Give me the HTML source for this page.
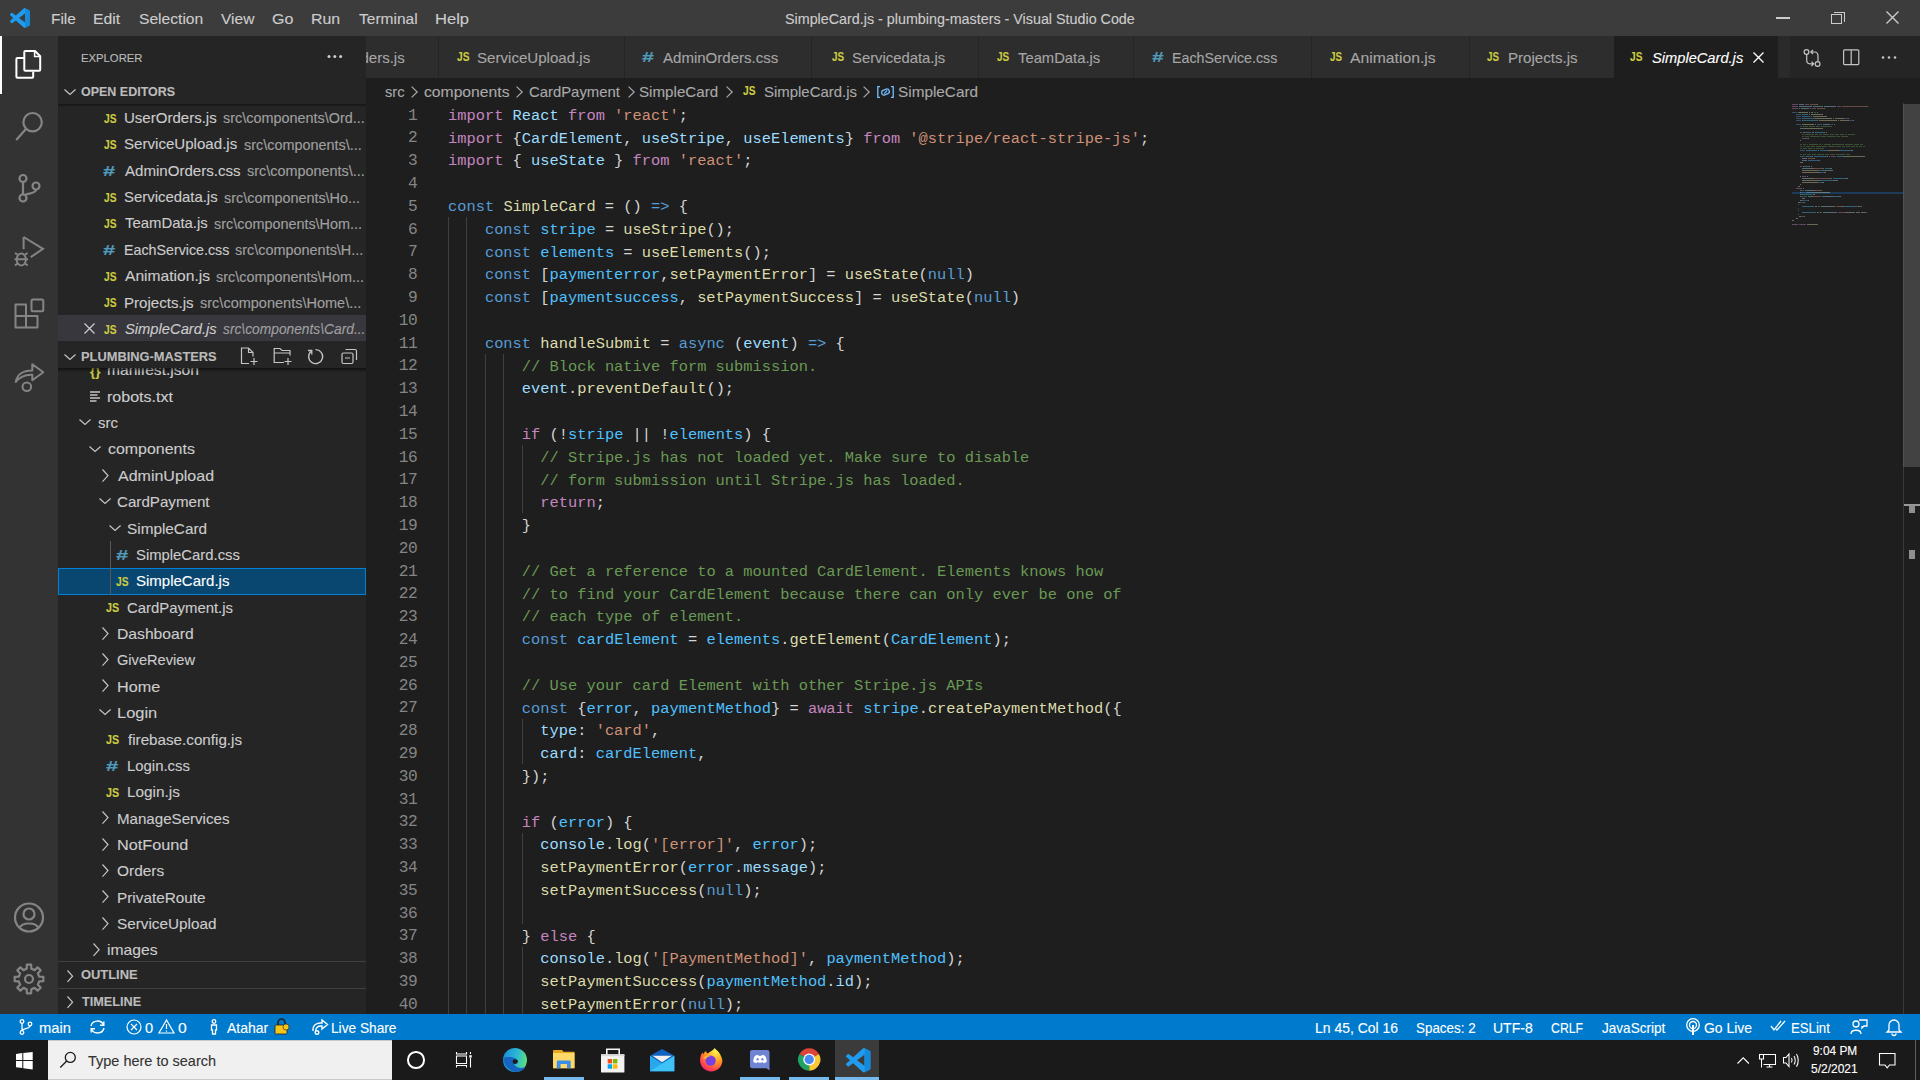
<!DOCTYPE html>
<html><head><meta charset="utf-8"><title>SimpleCard.js - plumbing-masters - Visual Studio Code</title>
<style>
*{margin:0;padding:0;box-sizing:border-box}
html,body{width:1920px;height:1080px;overflow:hidden;background:#1e1e1e;font-family:"Liberation Sans",sans-serif;color:#cccccc}
.a{position:absolute}
.t{position:absolute;white-space:pre;line-height:1}
svg{position:absolute;overflow:visible}
</style></head><body>

<div class="a" style="left:0;top:0;width:1920px;height:36px;background:#3c3c3c"></div>
<svg style="left:10px;top:8px" width="20" height="20" viewBox="0 0 100 100">
<path d="M96.46 10.8 L75.86 0.9 a6.23 6.23 0 0 0 -7.1 1.2 L29.35 38.05 L12.19 25 a4.16 4.16 0 0 0 -5.32 0.24 L1.37 30.25 a4.17 4.17 0 0 0 0 6.16 L16.26 50 L1.37 63.59 a4.17 4.17 0 0 0 0 6.16 l5.5 5 a4.16 4.16 0 0 0 5.32 0.24 L29.35 61.95 L68.76 97.9 a6.22 6.22 0 0 0 7.1 1.2 l20.6 -9.9 A6.24 6.24 0 0 0 100 83.6 V16.4 a6.24 6.24 0 0 0 -3.54 -5.6 Z M75 72.7 L45.1 50 L75 27.3 Z" fill="#1f9cf0"/><path d="M75.86 0.9 L96.46 10.8 a6.24 6.24 0 0 1 3.54 5.6 V83.6 a6.24 6.24 0 0 1 -3.54 5.6 l-20.6 9.9 Z" fill="#0f7fcc" opacity="0.6"/></svg>
<svg style="left:50.63px;top:6.48px" width="26.9" height="23.4"><text x="0" y="17.52" textLength="24.85" lengthAdjust="spacingAndGlyphs" style="font-family:'Liberation Sans';font-size:14.6px;font-weight:normal;font-style:normal;fill:#cccccc;stroke:#cccccc;stroke-width:0.12px;">File</text></svg>
<svg style="left:93.21px;top:6.48px" width="29.1" height="23.4"><text x="0" y="17.52" textLength="27.11" lengthAdjust="spacingAndGlyphs" style="font-family:'Liberation Sans';font-size:14.6px;font-weight:normal;font-style:normal;fill:#cccccc;stroke:#cccccc;stroke-width:0.12px;">Edit</text></svg>
<svg style="left:138.99px;top:6.48px" width="66.2" height="23.4"><text x="0" y="17.52" textLength="64.22" lengthAdjust="spacingAndGlyphs" style="font-family:'Liberation Sans';font-size:14.6px;font-weight:normal;font-style:normal;fill:#cccccc;stroke:#cccccc;stroke-width:0.12px;">Selection</text></svg>
<svg style="left:220.93px;top:6.48px" width="35.3" height="23.4"><text x="0" y="17.52" textLength="33.33" lengthAdjust="spacingAndGlyphs" style="font-family:'Liberation Sans';font-size:14.6px;font-weight:normal;font-style:normal;fill:#cccccc;stroke:#cccccc;stroke-width:0.12px;">View</text></svg>
<svg style="left:272.49px;top:6.48px" width="23.4" height="23.4"><text x="0" y="17.52" textLength="21.38" lengthAdjust="spacingAndGlyphs" style="font-family:'Liberation Sans';font-size:14.6px;font-weight:normal;font-style:normal;fill:#cccccc;stroke:#cccccc;stroke-width:0.12px;">Go</text></svg>
<svg style="left:311.40px;top:6.48px" width="31.1" height="23.4"><text x="0" y="17.52" textLength="29.13" lengthAdjust="spacingAndGlyphs" style="font-family:'Liberation Sans';font-size:14.6px;font-weight:normal;font-style:normal;fill:#cccccc;stroke:#cccccc;stroke-width:0.12px;">Run</text></svg>
<svg style="left:358.66px;top:6.48px" width="60.6" height="23.4"><text x="0" y="17.52" textLength="58.65" lengthAdjust="spacingAndGlyphs" style="font-family:'Liberation Sans';font-size:14.6px;font-weight:normal;font-style:normal;fill:#cccccc;stroke:#cccccc;stroke-width:0.12px;">Terminal</text></svg>
<svg style="left:434.64px;top:6.48px" width="36.1" height="23.4"><text x="0" y="17.52" textLength="34.05" lengthAdjust="spacingAndGlyphs" style="font-family:'Liberation Sans';font-size:14.6px;font-weight:normal;font-style:normal;fill:#cccccc;stroke:#cccccc;stroke-width:0.12px;">Help</text></svg>
<svg style="left:785.15px;top:7.16px" width="351.8" height="22.7"><text x="0" y="17.04" textLength="349.79" lengthAdjust="spacingAndGlyphs" style="font-family:'Liberation Sans';font-size:14.2px;font-weight:normal;font-style:normal;fill:#cccccc;stroke:#cccccc;stroke-width:0.12px;">SimpleCard.js - plumbing-masters - Visual Studio Code</text></svg>
<div class="a" style="left:1776px;top:17.2px;width:13.5px;height:1.4px;background:#cccccc"></div>
<div class="a" style="left:1831px;top:14.2px;width:11.2px;height:10.2px;border:1.4px solid #cccccc"></div>
<div class="a" style="left:1834px;top:11.5px;width:10.6px;height:10.6px;border-top:1.4px solid #cccccc;border-right:1.4px solid #cccccc"></div>
<svg style="left:1886px;top:11px" width="13" height="13" viewBox="0 0 13 13"><path d="M0.5 0.5 L12.5 12.5 M12.5 0.5 L0.5 12.5" stroke="#cccccc" stroke-width="1.4"/></svg>
<div class="a" style="left:0;top:36px;width:58px;height:978px;background:#333333"></div>
<div class="a" style="left:0;top:36px;width:2px;height:58px;background:#ffffff"></div>
<svg style="left:15px;top:49px" width="28" height="30" viewBox="0 0 28 30" fill="none" stroke="#ffffff" stroke-width="2">
<path d="M9.3 9 H2.4 a1 1 0 0 0 -1 1 V27.7 a1 1 0 0 0 1 1 H17.2 a1 1 0 0 0 1 -1 V22.7"/>
<path d="M9.3 3 a1 1 0 0 1 1 -1 H20 L25.2 7.2 V20.7 a1 1 0 0 1 -1 1 H10.3 a1 1 0 0 1 -1 -1 Z"/>
<path d="M19.6 2.5 V7.6 H24.8" stroke-width="1.5"/>
</svg>
<svg style="left:15px;top:111px" width="28" height="30" viewBox="0 0 28 30" fill="none" stroke="#858585" stroke-width="2.2">
<circle cx="17.6" cy="11.2" r="9.2"/><path d="M11.2 17.8 L1.2 29"/></svg>
<svg style="left:15px;top:173px" width="28" height="30" viewBox="0 0 28 30" fill="none" stroke="#858585" stroke-width="2.2">
<circle cx="8" cy="5.5" r="3.5"/><circle cx="8" cy="25" r="3.5"/><circle cx="21" cy="13" r="3.5"/>
<path d="M8 9 V21.5"/><path d="M21 16.5 C21 21 12 20 9 22.5"/></svg>
<svg style="left:13px;top:235px" width="32" height="32" viewBox="0 0 32 32" fill="none" stroke="#858585" stroke-width="2">
<path d="M10.6 2 V14.2"/><path d="M10.6 2 L30 13.9 L17.7 22.2"/>
<ellipse cx="8.3" cy="24.5" rx="4.6" ry="6"/><path d="M3.7 24.2 H12.9 M4.5 19.6 L2 18 M12.1 19.6 L14.6 18 M3.8 24.2 H1.5 M12.8 24.2 H15 M4.5 28.5 L2 30.5 M12.1 28.5 L14.6 30.5"/></svg>
<svg style="left:14px;top:298px" width="32" height="32" viewBox="0 0 32 32" fill="none" stroke="#858585" stroke-width="2" stroke-linejoin="round">
<path d="M1.5 6.5 H12 V18 H23.5 V29.5 H1.5 Z M1.5 18 H12 V29.5"/><rect x="17.5" y="1.5" width="11.8" height="11.8" rx="1.5"/></svg>
<svg style="left:14px;top:361px" width="32" height="32" viewBox="0 0 32 32" fill="none" stroke="#858585" stroke-width="2" stroke-linejoin="round">
<path d="M1.8 21 C3 13.5 9.5 9.5 18.3 9.6 V3.2 L29.3 11.2 L18.3 19.2 V13.8 C11.5 13.5 6 15.5 1.8 21 Z"/><circle cx="12.8" cy="25.8" r="4.3"/></svg>
<svg style="left:13px;top:902px" width="32" height="32" viewBox="0 0 32 32" fill="none" stroke="#858585" stroke-width="2.2">
<circle cx="16" cy="15.5" r="14"/><circle cx="16" cy="12" r="5.5"/><path d="M6.5 26 C9 20 23 20 25.5 26"/></svg>
<svg style="left:13px;top:963px" width="32" height="32" viewBox="0 0 32 32" fill="none" stroke="#858585" stroke-width="2.2">
<path d="M26.25 13.71 L30.34 13.83 L30.34 18.17 L26.25 18.29 L24.87 21.63 L27.67 24.61 L24.61 27.67 L21.63 24.87 L18.29 26.25 L18.17 30.34 L13.83 30.34 L13.71 26.25 L10.37 24.87 L7.39 27.67 L4.33 24.61 L7.13 21.63 L5.75 18.29 L1.66 18.17 L1.66 13.83 L5.75 13.71 L7.13 10.37 L4.33 7.39 L7.39 4.33 L10.37 7.13 L13.71 5.75 L13.83 1.66 L18.17 1.66 L18.29 5.75 L21.63 7.13 L24.61 4.33 L27.67 7.39 L24.87 10.37 Z" stroke-linejoin="round"/><circle cx="16" cy="16" r="4"/></svg>
<div class="a" style="left:58px;top:36px;width:308px;height:978px;background:#252526"></div>
<svg style="left:80.77px;top:47.94px" width="63.4" height="18.9"><text x="0" y="14.16" textLength="61.45" lengthAdjust="spacingAndGlyphs" style="font-family:'Liberation Sans';font-size:11.8px;font-weight:normal;font-style:normal;fill:#bbbbbb;stroke:#bbbbbb;stroke-width:0.12px;">EXPLORER</text></svg>
<svg style="left:320px;top:50px" width="30" height="12" viewBox="0 0 30 12" fill="#cccccc"><circle cx="9" cy="6.4" r="1.5"/><circle cx="14.8" cy="6.4" r="1.5"/><circle cx="20.6" cy="6.4" r="1.5"/></svg>
<svg style="left:63.60px;top:88.50px" width="12.00" height="6.00" viewBox="0 0 12.00 6.00"><path d="M0.5 0.5 L6.00 5.40 L11.50 0.5" fill="none" stroke="#c5c5c5" stroke-width="1.2"/></svg>
<svg style="left:81.19px;top:80.68px" width="96.1" height="20.2"><text x="0" y="15.12" textLength="94.10" lengthAdjust="spacingAndGlyphs" style="font-family:'Liberation Sans';font-size:12.6px;font-weight:bold;font-style:normal;fill:#bbbbbb;stroke:#bbbbbb;stroke-width:0.12px;">OPEN EDITORS</text></svg>
<svg style="left:103.64px;top:107.64px" width="14.6" height="20.5"><text x="0" y="15.36" textLength="12.56" lengthAdjust="spacingAndGlyphs" style="font-family:'Liberation Sans';font-size:12.8px;font-weight:bold;font-style:normal;fill:#cbcb41;stroke:#cbcb41;stroke-width:0.12px;">JS</text></svg>
<svg style="left:123.84px;top:105.00px" width="94.7" height="24.0"><text x="0" y="18.00" textLength="92.70" lengthAdjust="spacingAndGlyphs" style="font-family:'Liberation Sans';font-size:15px;font-weight:normal;font-style:normal;fill:#cccccc;stroke:#cccccc;stroke-width:0.12px;">UserOrders.js</text></svg>
<svg style="left:222.60px;top:106.44px" width="143.7" height="22.1"><text x="0" y="16.56" textLength="141.72" lengthAdjust="spacingAndGlyphs" style="font-family:'Liberation Sans';font-size:13.8px;font-weight:normal;font-style:normal;fill:#a0a0a0;stroke:#a0a0a0;stroke-width:0.12px;">src\components\Ord...</text></svg>
<svg style="left:103.64px;top:134.01px" width="14.6" height="20.5"><text x="0" y="15.36" textLength="12.56" lengthAdjust="spacingAndGlyphs" style="font-family:'Liberation Sans';font-size:12.8px;font-weight:bold;font-style:normal;fill:#cbcb41;stroke:#cbcb41;stroke-width:0.12px;">JS</text></svg>
<svg style="left:124.31px;top:131.37px" width="115.2" height="24.0"><text x="0" y="18.00" textLength="113.23" lengthAdjust="spacingAndGlyphs" style="font-family:'Liberation Sans';font-size:15px;font-weight:normal;font-style:normal;fill:#cccccc;stroke:#cccccc;stroke-width:0.12px;">ServiceUpload.js</text></svg>
<svg style="left:243.60px;top:132.81px" width="119.7" height="22.1"><text x="0" y="16.56" textLength="117.72" lengthAdjust="spacingAndGlyphs" style="font-family:'Liberation Sans';font-size:13.8px;font-weight:normal;font-style:normal;fill:#a0a0a0;stroke:#a0a0a0;stroke-width:0.12px;">src\components\...</text></svg>
<svg style="left:103.42px;top:158.84px" width="14.2" height="23.2"><text x="0" y="17.40" textLength="12.23" lengthAdjust="spacingAndGlyphs" style="font-family:'Liberation Sans';font-size:14.5px;font-weight:bold;font-style:normal;fill:#519aba;stroke:#519aba;stroke-width:0.12px;">#</text></svg>
<svg style="left:124.97px;top:157.74px" width="117.6" height="24.0"><text x="0" y="18.00" textLength="115.57" lengthAdjust="spacingAndGlyphs" style="font-family:'Liberation Sans';font-size:15px;font-weight:normal;font-style:normal;fill:#cccccc;stroke:#cccccc;stroke-width:0.12px;">AdminOrders.css</text></svg>
<svg style="left:247.30px;top:159.18px" width="119.7" height="22.1"><text x="0" y="16.56" textLength="117.72" lengthAdjust="spacingAndGlyphs" style="font-family:'Liberation Sans';font-size:13.8px;font-weight:normal;font-style:normal;fill:#a0a0a0;stroke:#a0a0a0;stroke-width:0.12px;">src\components\...</text></svg>
<svg style="left:103.64px;top:186.75px" width="14.6" height="20.5"><text x="0" y="15.36" textLength="12.56" lengthAdjust="spacingAndGlyphs" style="font-family:'Liberation Sans';font-size:12.8px;font-weight:bold;font-style:normal;fill:#cbcb41;stroke:#cbcb41;stroke-width:0.12px;">JS</text></svg>
<svg style="left:124.32px;top:184.11px" width="95.6" height="24.0"><text x="0" y="18.00" textLength="93.62" lengthAdjust="spacingAndGlyphs" style="font-family:'Liberation Sans';font-size:15px;font-weight:normal;font-style:normal;fill:#cccccc;stroke:#cccccc;stroke-width:0.12px;">Servicedata.js</text></svg>
<svg style="left:224.10px;top:185.55px" width="138.0" height="22.1"><text x="0" y="16.56" textLength="136.02" lengthAdjust="spacingAndGlyphs" style="font-family:'Liberation Sans';font-size:13.8px;font-weight:normal;font-style:normal;fill:#a0a0a0;stroke:#a0a0a0;stroke-width:0.12px;">src\components\Ho...</text></svg>
<svg style="left:103.64px;top:213.12px" width="14.6" height="20.5"><text x="0" y="15.36" textLength="12.56" lengthAdjust="spacingAndGlyphs" style="font-family:'Liberation Sans';font-size:12.8px;font-weight:bold;font-style:normal;fill:#cbcb41;stroke:#cbcb41;stroke-width:0.12px;">JS</text></svg>
<svg style="left:124.67px;top:210.48px" width="84.8" height="24.0"><text x="0" y="18.00" textLength="82.76" lengthAdjust="spacingAndGlyphs" style="font-family:'Liberation Sans';font-size:15px;font-weight:normal;font-style:normal;fill:#cccccc;stroke:#cccccc;stroke-width:0.12px;">TeamData.js</text></svg>
<svg style="left:213.50px;top:211.92px" width="150.0" height="22.1"><text x="0" y="16.56" textLength="148.02" lengthAdjust="spacingAndGlyphs" style="font-family:'Liberation Sans';font-size:13.8px;font-weight:normal;font-style:normal;fill:#a0a0a0;stroke:#a0a0a0;stroke-width:0.12px;">src\components\Hom...</text></svg>
<svg style="left:103.42px;top:237.95px" width="14.2" height="23.2"><text x="0" y="17.40" textLength="12.23" lengthAdjust="spacingAndGlyphs" style="font-family:'Liberation Sans';font-size:14.5px;font-weight:bold;font-style:normal;fill:#519aba;stroke:#519aba;stroke-width:0.12px;">#</text></svg>
<svg style="left:123.83px;top:236.85px" width="107.4" height="24.0"><text x="0" y="18.00" textLength="105.38" lengthAdjust="spacingAndGlyphs" style="font-family:'Liberation Sans';font-size:15px;font-weight:normal;font-style:normal;fill:#cccccc;stroke:#cccccc;stroke-width:0.12px;">EachService.css</text></svg>
<svg style="left:235.30px;top:238.29px" width="130.3" height="22.1"><text x="0" y="16.56" textLength="128.32" lengthAdjust="spacingAndGlyphs" style="font-family:'Liberation Sans';font-size:13.8px;font-weight:normal;font-style:normal;fill:#a0a0a0;stroke:#a0a0a0;stroke-width:0.12px;">src\components\H...</text></svg>
<svg style="left:103.64px;top:265.86px" width="14.6" height="20.5"><text x="0" y="15.36" textLength="12.56" lengthAdjust="spacingAndGlyphs" style="font-family:'Liberation Sans';font-size:12.8px;font-weight:bold;font-style:normal;fill:#cbcb41;stroke:#cbcb41;stroke-width:0.12px;">JS</text></svg>
<svg style="left:124.97px;top:263.22px" width="87.0" height="24.0"><text x="0" y="18.00" textLength="84.99" lengthAdjust="spacingAndGlyphs" style="font-family:'Liberation Sans';font-size:15px;font-weight:normal;font-style:normal;fill:#cccccc;stroke:#cccccc;stroke-width:0.12px;">Animation.js</text></svg>
<svg style="left:216.30px;top:264.66px" width="150.0" height="22.1"><text x="0" y="16.56" textLength="148.02" lengthAdjust="spacingAndGlyphs" style="font-family:'Liberation Sans';font-size:13.8px;font-weight:normal;font-style:normal;fill:#a0a0a0;stroke:#a0a0a0;stroke-width:0.12px;">src\components\Hom...</text></svg>
<svg style="left:103.64px;top:292.23px" width="14.6" height="20.5"><text x="0" y="15.36" textLength="12.56" lengthAdjust="spacingAndGlyphs" style="font-family:'Liberation Sans';font-size:12.8px;font-weight:bold;font-style:normal;fill:#cbcb41;stroke:#cbcb41;stroke-width:0.12px;">JS</text></svg>
<svg style="left:123.76px;top:289.59px" width="71.6" height="24.0"><text x="0" y="18.00" textLength="69.58" lengthAdjust="spacingAndGlyphs" style="font-family:'Liberation Sans';font-size:15px;font-weight:normal;font-style:normal;fill:#cccccc;stroke:#cccccc;stroke-width:0.12px;">Projects.js</text></svg>
<svg style="left:199.50px;top:291.03px" width="163.3" height="22.1"><text x="0" y="16.56" textLength="161.33" lengthAdjust="spacingAndGlyphs" style="font-family:'Liberation Sans';font-size:13.8px;font-weight:normal;font-style:normal;fill:#a0a0a0;stroke:#a0a0a0;stroke-width:0.12px;">src\components\Home\...</text></svg>
<div class="a" style="left:58px;top:314.96px;width:308px;height:26.37px;background:#37373d"></div>
<svg style="left:83.5px;top:323.46px" width="11" height="11" viewBox="0 0 11 11"><path d="M0.5 0.5 L10.5 10.5 M10.5 0.5 L0.5 10.5" stroke="#cccccc" stroke-width="1.3"/></svg>
<svg style="left:103.64px;top:318.60px" width="14.6" height="20.5"><text x="0" y="15.36" textLength="12.56" lengthAdjust="spacingAndGlyphs" style="font-family:'Liberation Sans';font-size:12.8px;font-weight:bold;font-style:normal;fill:#cbcb41;stroke:#cbcb41;stroke-width:0.12px;">JS</text></svg>
<svg style="left:124.58px;top:315.96px" width="93.7" height="24.0"><text x="0" y="18.00" textLength="91.72" lengthAdjust="spacingAndGlyphs" style="font-family:'Liberation Sans';font-size:15px;font-weight:normal;font-style:italic;fill:#cccccc;stroke:#cccccc;stroke-width:0.12px;">SimpleCard.js</text></svg>
<svg style="left:222.97px;top:317.40px" width="144.4" height="22.1"><text x="0" y="16.56" textLength="142.42" lengthAdjust="spacingAndGlyphs" style="font-family:'Liberation Sans';font-size:13.8px;font-weight:normal;font-style:italic;fill:#a0a0a0;stroke:#a0a0a0;stroke-width:0.12px;">src\components\Card...</text></svg>
<div class="a" style="left:58px;top:104px;width:308px;height:3px;background:linear-gradient(rgba(0,0,0,0.45),rgba(0,0,0,0))"></div>
<svg style="left:89.78px;top:359.73px" width="12.4" height="20.8"><text x="0" y="15.60" textLength="10.42" lengthAdjust="spacingAndGlyphs" style="font-family:'Liberation Sans';font-size:13px;font-weight:bold;font-style:normal;fill:#cbcb41;stroke:#cbcb41;stroke-width:0.12px;">{}</text></svg>
<svg style="left:107.46px;top:357.33px" width="93.9" height="24.0"><text x="0" y="18.00" textLength="91.95" lengthAdjust="spacingAndGlyphs" style="font-family:'Liberation Sans';font-size:15px;font-weight:normal;font-style:normal;fill:#cccccc;stroke:#cccccc;stroke-width:0.12px;">manifest.json</text></svg>
<svg style="left:89.8px;top:390.7px" width="11" height="12" viewBox="0 0 11 12"><path d="M0 1 H10 M0 4 H7.5 M0 7 H10 M0 10 H6.5" stroke="#c5c5c5" stroke-width="1.6"/></svg>
<svg style="left:107.44px;top:383.70px" width="67.9" height="24.0"><text x="0" y="18.00" textLength="65.88" lengthAdjust="spacingAndGlyphs" style="font-family:'Liberation Sans';font-size:15px;font-weight:normal;font-style:normal;fill:#cccccc;stroke:#cccccc;stroke-width:0.12px;">robots.txt</text></svg>
<svg style="left:78.90px;top:419.27px" width="12.00" height="6.00" viewBox="0 0 12.00 6.00"><path d="M0.5 0.5 L6.00 5.40 L11.50 0.5" fill="none" stroke="#c5c5c5" stroke-width="1.2"/></svg>
<svg style="left:98.18px;top:410.07px" width="21.9" height="24.0"><text x="0" y="18.00" textLength="19.91" lengthAdjust="spacingAndGlyphs" style="font-family:'Liberation Sans';font-size:15px;font-weight:normal;font-style:normal;fill:#cccccc;stroke:#cccccc;stroke-width:0.12px;">src</text></svg>
<svg style="left:88.70px;top:445.64px" width="12.10" height="6.05" viewBox="0 0 12.10 6.05"><path d="M0.5 0.5 L6.05 5.45 L11.60 0.5" fill="none" stroke="#c5c5c5" stroke-width="1.2"/></svg>
<svg style="left:107.82px;top:436.44px" width="88.9" height="24.0"><text x="0" y="18.00" textLength="86.85" lengthAdjust="spacingAndGlyphs" style="font-family:'Liberation Sans';font-size:15px;font-weight:normal;font-style:normal;fill:#cccccc;stroke:#cccccc;stroke-width:0.12px;">components</text></svg>
<svg style="left:101.90px;top:468.51px" width="6.60" height="13.20" viewBox="0 0 6.60 13.20"><path d="M0.5 0.5 L6.00 6.60 L0.5 12.70" fill="none" stroke="#c5c5c5" stroke-width="1.2"/></svg>
<svg style="left:117.67px;top:462.81px" width="98.1" height="24.0"><text x="0" y="18.00" textLength="96.06" lengthAdjust="spacingAndGlyphs" style="font-family:'Liberation Sans';font-size:15px;font-weight:normal;font-style:normal;fill:#cccccc;stroke:#cccccc;stroke-width:0.12px;">AdminUpload</text></svg>
<svg style="left:98.60px;top:498.38px" width="12.10" height="6.05" viewBox="0 0 12.10 6.05"><path d="M0.5 0.5 L6.05 5.45 L11.60 0.5" fill="none" stroke="#c5c5c5" stroke-width="1.2"/></svg>
<svg style="left:116.93px;top:489.18px" width="94.6" height="24.0"><text x="0" y="18.00" textLength="92.58" lengthAdjust="spacingAndGlyphs" style="font-family:'Liberation Sans';font-size:15px;font-weight:normal;font-style:normal;fill:#cccccc;stroke:#cccccc;stroke-width:0.12px;">CardPayment</text></svg>
<svg style="left:108.50px;top:524.75px" width="12.10" height="6.05" viewBox="0 0 12.10 6.05"><path d="M0.5 0.5 L6.05 5.45 L11.60 0.5" fill="none" stroke="#c5c5c5" stroke-width="1.2"/></svg>
<svg style="left:127.10px;top:515.55px" width="82.1" height="24.0"><text x="0" y="18.00" textLength="80.08" lengthAdjust="spacingAndGlyphs" style="font-family:'Liberation Sans';font-size:15px;font-weight:normal;font-style:normal;fill:#cccccc;stroke:#cccccc;stroke-width:0.12px;">SimpleCard</text></svg>
<svg style="left:115.82px;top:543.02px" width="14.3" height="23.2"><text x="0" y="17.40" textLength="12.34" lengthAdjust="spacingAndGlyphs" style="font-family:'Liberation Sans';font-size:14.5px;font-weight:bold;font-style:normal;fill:#519aba;stroke:#519aba;stroke-width:0.12px;">#</text></svg>
<svg style="left:136.33px;top:541.92px" width="105.9" height="24.0"><text x="0" y="18.00" textLength="103.91" lengthAdjust="spacingAndGlyphs" style="font-family:'Liberation Sans';font-size:15px;font-weight:normal;font-style:normal;fill:#cccccc;stroke:#cccccc;stroke-width:0.12px;">SimpleCard.css</text></svg>
<div class="a" style="left:58px;top:568.29px;width:308px;height:26.37px;background:#094771;border:1px solid #007fd4"></div>
<svg style="left:116.04px;top:570.93px" width="14.6" height="20.5"><text x="0" y="15.36" textLength="12.56" lengthAdjust="spacingAndGlyphs" style="font-family:'Liberation Sans';font-size:12.8px;font-weight:bold;font-style:normal;fill:#cbcb41;stroke:#cbcb41;stroke-width:0.12px;">JS</text></svg>
<svg style="left:136.32px;top:568.29px" width="95.4" height="24.0"><text x="0" y="18.00" textLength="93.42" lengthAdjust="spacingAndGlyphs" style="font-family:'Liberation Sans';font-size:15px;font-weight:normal;font-style:normal;fill:#ffffff;stroke:#ffffff;stroke-width:0.12px;">SimpleCard.js</text></svg>
<svg style="left:105.64px;top:597.30px" width="15.2" height="20.5"><text x="0" y="15.36" textLength="13.18" lengthAdjust="spacingAndGlyphs" style="font-family:'Liberation Sans';font-size:12.8px;font-weight:bold;font-style:normal;fill:#cbcb41;stroke:#cbcb41;stroke-width:0.12px;">JS</text></svg>
<svg style="left:127.04px;top:594.66px" width="108.0" height="24.0"><text x="0" y="18.00" textLength="106.00" lengthAdjust="spacingAndGlyphs" style="font-family:'Liberation Sans';font-size:15px;font-weight:normal;font-style:normal;fill:#cccccc;stroke:#cccccc;stroke-width:0.12px;">CardPayment.js</text></svg>
<svg style="left:101.90px;top:626.73px" width="6.60" height="13.20" viewBox="0 0 6.60 13.20"><path d="M0.5 0.5 L6.00 6.60 L0.5 12.70" fill="none" stroke="#c5c5c5" stroke-width="1.2"/></svg>
<svg style="left:116.71px;top:621.03px" width="78.7" height="24.0"><text x="0" y="18.00" textLength="76.70" lengthAdjust="spacingAndGlyphs" style="font-family:'Liberation Sans';font-size:15px;font-weight:normal;font-style:normal;fill:#cccccc;stroke:#cccccc;stroke-width:0.12px;">Dashboard</text></svg>
<svg style="left:101.90px;top:653.10px" width="6.60" height="13.20" viewBox="0 0 6.60 13.20"><path d="M0.5 0.5 L6.00 6.60 L0.5 12.70" fill="none" stroke="#c5c5c5" stroke-width="1.2"/></svg>
<svg style="left:117.26px;top:647.40px" width="80.0" height="24.0"><text x="0" y="18.00" textLength="78.00" lengthAdjust="spacingAndGlyphs" style="font-family:'Liberation Sans';font-size:15px;font-weight:normal;font-style:normal;fill:#cccccc;stroke:#cccccc;stroke-width:0.12px;">GiveReview</text></svg>
<svg style="left:101.90px;top:679.47px" width="6.60" height="13.20" viewBox="0 0 6.60 13.20"><path d="M0.5 0.5 L6.00 6.60 L0.5 12.70" fill="none" stroke="#c5c5c5" stroke-width="1.2"/></svg>
<svg style="left:116.67px;top:673.77px" width="45.1" height="24.0"><text x="0" y="18.00" textLength="43.15" lengthAdjust="spacingAndGlyphs" style="font-family:'Liberation Sans';font-size:15px;font-weight:normal;font-style:normal;fill:#cccccc;stroke:#cccccc;stroke-width:0.12px;">Home</text></svg>
<svg style="left:98.60px;top:709.34px" width="12.10" height="6.05" viewBox="0 0 12.10 6.05"><path d="M0.5 0.5 L6.05 5.45 L11.60 0.5" fill="none" stroke="#c5c5c5" stroke-width="1.2"/></svg>
<svg style="left:116.65px;top:700.14px" width="42.2" height="24.0"><text x="0" y="18.00" textLength="40.22" lengthAdjust="spacingAndGlyphs" style="font-family:'Liberation Sans';font-size:15px;font-weight:normal;font-style:normal;fill:#cccccc;stroke:#cccccc;stroke-width:0.12px;">Login</text></svg>
<svg style="left:105.64px;top:729.15px" width="15.2" height="20.5"><text x="0" y="15.36" textLength="13.18" lengthAdjust="spacingAndGlyphs" style="font-family:'Liberation Sans';font-size:12.8px;font-weight:bold;font-style:normal;fill:#cbcb41;stroke:#cbcb41;stroke-width:0.12px;">JS</text></svg>
<svg style="left:127.78px;top:726.51px" width="116.1" height="24.0"><text x="0" y="18.00" textLength="114.06" lengthAdjust="spacingAndGlyphs" style="font-family:'Liberation Sans';font-size:15px;font-weight:normal;font-style:normal;fill:#cccccc;stroke:#cccccc;stroke-width:0.12px;">firebase.config.js</text></svg>
<svg style="left:105.62px;top:753.98px" width="14.3" height="23.2"><text x="0" y="17.40" textLength="12.34" lengthAdjust="spacingAndGlyphs" style="font-family:'Liberation Sans';font-size:14.5px;font-weight:bold;font-style:normal;fill:#519aba;stroke:#519aba;stroke-width:0.12px;">#</text></svg>
<svg style="left:126.78px;top:752.88px" width="64.9" height="24.0"><text x="0" y="18.00" textLength="62.86" lengthAdjust="spacingAndGlyphs" style="font-family:'Liberation Sans';font-size:15px;font-weight:normal;font-style:normal;fill:#cccccc;stroke:#cccccc;stroke-width:0.12px;">Login.css</text></svg>
<svg style="left:105.64px;top:781.89px" width="15.2" height="20.5"><text x="0" y="15.36" textLength="13.18" lengthAdjust="spacingAndGlyphs" style="font-family:'Liberation Sans';font-size:12.8px;font-weight:bold;font-style:normal;fill:#cbcb41;stroke:#cbcb41;stroke-width:0.12px;">JS</text></svg>
<svg style="left:126.74px;top:779.25px" width="54.9" height="24.0"><text x="0" y="18.00" textLength="52.91" lengthAdjust="spacingAndGlyphs" style="font-family:'Liberation Sans';font-size:15px;font-weight:normal;font-style:normal;fill:#cccccc;stroke:#cccccc;stroke-width:0.12px;">Login.js</text></svg>
<svg style="left:101.90px;top:811.32px" width="6.60" height="13.20" viewBox="0 0 6.60 13.20"><path d="M0.5 0.5 L6.00 6.60 L0.5 12.70" fill="none" stroke="#c5c5c5" stroke-width="1.2"/></svg>
<svg style="left:116.76px;top:805.62px" width="114.5" height="24.0"><text x="0" y="18.00" textLength="112.48" lengthAdjust="spacingAndGlyphs" style="font-family:'Liberation Sans';font-size:15px;font-weight:normal;font-style:normal;fill:#cccccc;stroke:#cccccc;stroke-width:0.12px;">ManageServices</text></svg>
<svg style="left:101.90px;top:837.69px" width="6.60" height="13.20" viewBox="0 0 6.60 13.20"><path d="M0.5 0.5 L6.00 6.60 L0.5 12.70" fill="none" stroke="#c5c5c5" stroke-width="1.2"/></svg>
<svg style="left:116.67px;top:831.99px" width="73.3" height="24.0"><text x="0" y="18.00" textLength="71.28" lengthAdjust="spacingAndGlyphs" style="font-family:'Liberation Sans';font-size:15px;font-weight:normal;font-style:normal;fill:#cccccc;stroke:#cccccc;stroke-width:0.12px;">NotFound</text></svg>
<svg style="left:101.90px;top:864.06px" width="6.60" height="13.20" viewBox="0 0 6.60 13.20"><path d="M0.5 0.5 L6.00 6.60 L0.5 12.70" fill="none" stroke="#c5c5c5" stroke-width="1.2"/></svg>
<svg style="left:117.27px;top:858.36px" width="49.2" height="24.0"><text x="0" y="18.00" textLength="47.19" lengthAdjust="spacingAndGlyphs" style="font-family:'Liberation Sans';font-size:15px;font-weight:normal;font-style:normal;fill:#cccccc;stroke:#cccccc;stroke-width:0.12px;">Orders</text></svg>
<svg style="left:101.90px;top:890.43px" width="6.60" height="13.20" viewBox="0 0 6.60 13.20"><path d="M0.5 0.5 L6.00 6.60 L0.5 12.70" fill="none" stroke="#c5c5c5" stroke-width="1.2"/></svg>
<svg style="left:116.74px;top:884.73px" width="90.6" height="24.0"><text x="0" y="18.00" textLength="88.64" lengthAdjust="spacingAndGlyphs" style="font-family:'Liberation Sans';font-size:15px;font-weight:normal;font-style:normal;fill:#cccccc;stroke:#cccccc;stroke-width:0.12px;">PrivateRoute</text></svg>
<svg style="left:101.90px;top:916.80px" width="6.60" height="13.20" viewBox="0 0 6.60 13.20"><path d="M0.5 0.5 L6.00 6.60 L0.5 12.70" fill="none" stroke="#c5c5c5" stroke-width="1.2"/></svg>
<svg style="left:117.31px;top:911.10px" width="101.5" height="24.0"><text x="0" y="18.00" textLength="99.48" lengthAdjust="spacingAndGlyphs" style="font-family:'Liberation Sans';font-size:15px;font-weight:normal;font-style:normal;fill:#cccccc;stroke:#cccccc;stroke-width:0.12px;">ServiceUpload</text></svg>
<svg style="left:92.80px;top:943.17px" width="6.70" height="13.40" viewBox="0 0 6.70 13.40"><path d="M0.5 0.5 L6.10 6.70 L0.5 12.90" fill="none" stroke="#c5c5c5" stroke-width="1.2"/></svg>
<svg style="left:107.35px;top:937.47px" width="52.5" height="24.0"><text x="0" y="18.00" textLength="50.51" lengthAdjust="spacingAndGlyphs" style="font-family:'Liberation Sans';font-size:15px;font-weight:normal;font-style:normal;fill:#cccccc;stroke:#cccccc;stroke-width:0.12px;">images</text></svg>
<div class="a" style="left:110.2px;top:541px;width:1px;height:53px;background:#585858"></div>
<div class="a" style="left:58px;top:342px;width:308px;height:25.5px;background:#252526"></div>
<div class="a" style="left:58px;top:367.5px;width:308px;height:4px;background:linear-gradient(rgba(0,0,0,0.55),rgba(0,0,0,0))"></div>
<svg style="left:63.60px;top:353.50px" width="12.00" height="6.00" viewBox="0 0 12.00 6.00"><path d="M0.5 0.5 L6.00 5.40 L11.50 0.5" fill="none" stroke="#c5c5c5" stroke-width="1.2"/></svg>
<svg style="left:80.84px;top:345.64px" width="137.7" height="20.5"><text x="0" y="15.36" textLength="135.66" lengthAdjust="spacingAndGlyphs" style="font-family:'Liberation Sans';font-size:12.8px;font-weight:bold;font-style:normal;fill:#bbbbbb;stroke:#bbbbbb;stroke-width:0.12px;">PLUMBING-MASTERS</text></svg>
<svg style="left:240px;top:347px" width="19" height="19" viewBox="0 0 19 19" fill="none" stroke="#c5c5c5" stroke-width="1.2">
<path d="M9 16.5 H1.5 V1 H8.5 L13 5.5 V9.5 M8.5 1 V5.5 H13 M14 11 V18 M10.5 14.5 H17.5"/></svg>
<svg style="left:272.5px;top:347px" width="20" height="19" viewBox="0 0 20 19" fill="none" stroke="#c5c5c5" stroke-width="1.2">
<path d="M11 15.5 H1.2 V1.5 H7 L9 3.5 H17 V8.5 M1.2 6 H17 M15 11 V18 M11.5 14.5 H18.5"/></svg>
<svg style="left:307px;top:348px" width="17" height="17" viewBox="0 0 17 17" fill="none" stroke="#c5c5c5" stroke-width="1.3">
<path d="M4.2 3.2 A7 7 0 1 0 8.5 1.6"/><path d="M1 2.5 H4.8 V6.5"/></svg>
<svg style="left:340.5px;top:348px" width="17" height="17" viewBox="0 0 17 17" fill="none" stroke="#c5c5c5" stroke-width="1.2">
<rect x="1" y="5" width="11" height="10.5" rx="1.5"/><path d="M4.5 1.5 H14 a1.5 1.5 0 0 1 1.5 1.5 V12 M4 10 H9"/></svg>
<div class="a" style="left:58px;top:961px;width:308px;height:1px;background:#414141"></div>
<div class="a" style="left:58px;top:988px;width:308px;height:1px;background:#414141"></div>
<svg style="left:66.60px;top:969.50px" width="6.20" height="12.40" viewBox="0 0 6.20 12.40"><path d="M0.5 0.5 L5.60 6.20 L0.5 11.90" fill="none" stroke="#c5c5c5" stroke-width="1.2"/></svg>
<svg style="left:81.17px;top:964.28px" width="58.6" height="20.2"><text x="0" y="15.12" textLength="56.63" lengthAdjust="spacingAndGlyphs" style="font-family:'Liberation Sans';font-size:12.6px;font-weight:bold;font-style:normal;fill:#bbbbbb;stroke:#bbbbbb;stroke-width:0.12px;">OUTLINE</text></svg>
<svg style="left:66.60px;top:996.00px" width="6.20" height="12.40" viewBox="0 0 6.20 12.40"><path d="M0.5 0.5 L5.60 6.20 L0.5 11.90" fill="none" stroke="#c5c5c5" stroke-width="1.2"/></svg>
<svg style="left:82.26px;top:990.88px" width="61.2" height="20.2"><text x="0" y="15.12" textLength="59.24" lengthAdjust="spacingAndGlyphs" style="font-family:'Liberation Sans';font-size:12.6px;font-weight:bold;font-style:normal;fill:#bbbbbb;stroke:#bbbbbb;stroke-width:0.12px;">TIMELINE</text></svg>
<div class="a" style="left:366px;top:36px;width:1554px;height:42px;background:#252526"></div>
<div class="a" style="left:1778px;top:36px;width:12px;height:42px;background:#2a2a2b"></div>
<div class="a" style="left:366px;top:36px;width:72px;height:42px;background:#2d2d2d"></div>
<div class="a" style="left:439px;top:36px;width:185px;height:42px;background:#2d2d2d"></div>
<div class="a" style="left:625px;top:36px;width:186px;height:42px;background:#2d2d2d"></div>
<div class="a" style="left:812px;top:36px;width:166px;height:42px;background:#2d2d2d"></div>
<div class="a" style="left:979px;top:36px;width:154px;height:42px;background:#2d2d2d"></div>
<div class="a" style="left:1134px;top:36px;width:177px;height:42px;background:#2d2d2d"></div>
<div class="a" style="left:1312px;top:36px;width:157px;height:42px;background:#2d2d2d"></div>
<div class="a" style="left:1470px;top:36px;width:144px;height:42px;background:#2d2d2d"></div>
<div class="a" style="left:1614px;top:36px;width:164px;height:42px;background:#1e1e1e"></div>
<div class="a" style="left:366px;top:36px;width:72px;height:42px;overflow:hidden">
<svg style="left:-54.16px;top:8.70px" width="94.7" height="24.0"><text x="0" y="18.00" textLength="92.70" lengthAdjust="spacingAndGlyphs" style="font-family:'Liberation Sans';font-size:15px;font-weight:normal;font-style:normal;fill:#a6a6a6;stroke:#a6a6a6;stroke-width:0.12px;">UserOrders.js</text></svg>
</div>
<svg style="left:456.84px;top:45.84px" width="14.6" height="20.5"><text x="0" y="15.36" textLength="12.56" lengthAdjust="spacingAndGlyphs" style="font-family:'Liberation Sans';font-size:12.8px;font-weight:bold;font-style:normal;fill:#cbcb41;stroke:#cbcb41;stroke-width:0.12px;">JS</text></svg>
<svg style="left:476.81px;top:44.70px" width="115.2" height="24.0"><text x="0" y="18.00" textLength="113.23" lengthAdjust="spacingAndGlyphs" style="font-family:'Liberation Sans';font-size:15px;font-weight:normal;font-style:normal;fill:#a6a6a6;stroke:#a6a6a6;stroke-width:0.12px;">ServiceUpload.js</text></svg>
<svg style="left:642.13px;top:45.10px" width="14.0" height="23.2"><text x="0" y="17.40" textLength="12.02" lengthAdjust="spacingAndGlyphs" style="font-family:'Liberation Sans';font-size:14.5px;font-weight:bold;font-style:normal;fill:#519aba;stroke:#519aba;stroke-width:0.12px;">#</text></svg>
<svg style="left:663.22px;top:44.70px" width="117.3" height="24.0"><text x="0" y="18.00" textLength="115.32" lengthAdjust="spacingAndGlyphs" style="font-family:'Liberation Sans';font-size:15px;font-weight:normal;font-style:normal;fill:#a6a6a6;stroke:#a6a6a6;stroke-width:0.12px;">AdminOrders.css</text></svg>
<svg style="left:831.55px;top:45.84px" width="14.1" height="20.5"><text x="0" y="15.36" textLength="12.14" lengthAdjust="spacingAndGlyphs" style="font-family:'Liberation Sans';font-size:12.8px;font-weight:bold;font-style:normal;fill:#cbcb41;stroke:#cbcb41;stroke-width:0.12px;">JS</text></svg>
<svg style="left:851.63px;top:44.70px" width="95.2" height="24.0"><text x="0" y="18.00" textLength="93.21" lengthAdjust="spacingAndGlyphs" style="font-family:'Liberation Sans';font-size:15px;font-weight:normal;font-style:normal;fill:#a6a6a6;stroke:#a6a6a6;stroke-width:0.12px;">Servicedata.js</text></svg>
<svg style="left:997.15px;top:45.84px" width="14.2" height="20.5"><text x="0" y="15.36" textLength="12.24" lengthAdjust="spacingAndGlyphs" style="font-family:'Liberation Sans';font-size:12.8px;font-weight:bold;font-style:normal;fill:#cbcb41;stroke:#cbcb41;stroke-width:0.12px;">JS</text></svg>
<svg style="left:1017.67px;top:44.70px" width="84.3" height="24.0"><text x="0" y="18.00" textLength="82.25" lengthAdjust="spacingAndGlyphs" style="font-family:'Liberation Sans';font-size:15px;font-weight:normal;font-style:normal;fill:#a6a6a6;stroke:#a6a6a6;stroke-width:0.12px;">TeamData.js</text></svg>
<svg style="left:1152.14px;top:45.10px" width="13.7" height="23.2"><text x="0" y="17.40" textLength="11.70" lengthAdjust="spacingAndGlyphs" style="font-family:'Liberation Sans';font-size:14.5px;font-weight:bold;font-style:normal;fill:#519aba;stroke:#519aba;stroke-width:0.12px;">#</text></svg>
<svg style="left:1172.13px;top:44.70px" width="107.3" height="24.0"><text x="0" y="18.00" textLength="105.28" lengthAdjust="spacingAndGlyphs" style="font-family:'Liberation Sans';font-size:15px;font-weight:normal;font-style:normal;fill:#a6a6a6;stroke:#a6a6a6;stroke-width:0.12px;">EachService.css</text></svg>
<svg style="left:1330.35px;top:45.84px" width="14.0" height="20.5"><text x="0" y="15.36" textLength="12.03" lengthAdjust="spacingAndGlyphs" style="font-family:'Liberation Sans';font-size:12.8px;font-weight:bold;font-style:normal;fill:#cbcb41;stroke:#cbcb41;stroke-width:0.12px;">JS</text></svg>
<svg style="left:1349.97px;top:44.70px" width="87.6" height="24.0"><text x="0" y="18.00" textLength="85.60" lengthAdjust="spacingAndGlyphs" style="font-family:'Liberation Sans';font-size:15px;font-weight:normal;font-style:normal;fill:#a6a6a6;stroke:#a6a6a6;stroke-width:0.12px;">Animation.js</text></svg>
<svg style="left:1487.35px;top:45.84px" width="14.0" height="20.5"><text x="0" y="15.36" textLength="12.03" lengthAdjust="spacingAndGlyphs" style="font-family:'Liberation Sans';font-size:12.8px;font-weight:bold;font-style:normal;fill:#cbcb41;stroke:#cbcb41;stroke-width:0.12px;">JS</text></svg>
<svg style="left:1507.51px;top:44.70px" width="71.5" height="24.0"><text x="0" y="18.00" textLength="69.53" lengthAdjust="spacingAndGlyphs" style="font-family:'Liberation Sans';font-size:15px;font-weight:normal;font-style:normal;fill:#a6a6a6;stroke:#a6a6a6;stroke-width:0.12px;">Projects.js</text></svg>
<svg style="left:1630.45px;top:45.84px" width="14.5" height="20.5"><text x="0" y="15.36" textLength="12.45" lengthAdjust="spacingAndGlyphs" style="font-family:'Liberation Sans';font-size:12.8px;font-weight:bold;font-style:normal;fill:#cbcb41;stroke:#cbcb41;stroke-width:0.12px;">JS</text></svg>
<svg style="left:1652.08px;top:44.70px" width="93.2" height="24.0"><text x="0" y="18.00" textLength="91.22" lengthAdjust="spacingAndGlyphs" style="font-family:'Liberation Sans';font-size:15px;font-weight:normal;font-style:italic;fill:#ffffff;stroke:#ffffff;stroke-width:0.12px;">SimpleCard.js</text></svg>
<svg style="left:1752.5px;top:51.5px" width="11" height="11" viewBox="0 0 11 11"><path d="M0.5 0.5 L10.5 10.5 M10.5 0.5 L0.5 10.5" stroke="#ffffff" stroke-width="1.3"/></svg>
<svg style="left:1795px;top:40px" width="110" height="35" viewBox="0 0 110 35" fill="none" stroke="#c5c5c5" stroke-width="1.2">
<circle cx="11.5" cy="12" r="2.4"/><circle cx="22.6" cy="24" r="2.4"/>
<path d="M11.7 14.5 V20 Q11.7 23.8 15 23.8 H18.5 M16.5 21.6 L18.7 23.8 L16.5 26"/>
<path d="M23 21.5 V16 Q23 12 19.5 12 H16 M18 9.8 L15.8 12 L18 14.2"/>
<rect x="48.6" y="9.8" width="15.2" height="14.8" rx="1"/><path d="M56.2 10 V24.5"/>
<circle cx="88" cy="17.5" r="1.3" fill="#c5c5c5" stroke="none"/><circle cx="94" cy="17.5" r="1.3" fill="#c5c5c5" stroke="none"/><circle cx="100" cy="17.5" r="1.3" fill="#c5c5c5" stroke="none"/>
</svg>
<svg style="left:384.59px;top:79.00px" width="21.5" height="24.0"><text x="0" y="18.00" textLength="19.54" lengthAdjust="spacingAndGlyphs" style="font-family:'Liberation Sans';font-size:15px;font-weight:normal;font-style:normal;fill:#a9a9a9;stroke:#a9a9a9;stroke-width:0.12px;">src</text></svg>
<svg style="left:423.83px;top:79.00px" width="87.5" height="24.0"><text x="0" y="18.00" textLength="85.48" lengthAdjust="spacingAndGlyphs" style="font-family:'Liberation Sans';font-size:15px;font-weight:normal;font-style:normal;fill:#a9a9a9;stroke:#a9a9a9;stroke-width:0.12px;">components</text></svg>
<svg style="left:528.75px;top:79.00px" width="92.9" height="24.0"><text x="0" y="18.00" textLength="90.86" lengthAdjust="spacingAndGlyphs" style="font-family:'Liberation Sans';font-size:15px;font-weight:normal;font-style:normal;fill:#a9a9a9;stroke:#a9a9a9;stroke-width:0.12px;">CardPayment</text></svg>
<svg style="left:639.31px;top:79.00px" width="81.2" height="24.0"><text x="0" y="18.00" textLength="79.16" lengthAdjust="spacingAndGlyphs" style="font-family:'Liberation Sans';font-size:15px;font-weight:normal;font-style:normal;fill:#a9a9a9;stroke:#a9a9a9;stroke-width:0.12px;">SimpleCard</text></svg>
<svg style="left:763.62px;top:79.00px" width="94.9" height="24.0"><text x="0" y="18.00" textLength="92.92" lengthAdjust="spacingAndGlyphs" style="font-family:'Liberation Sans';font-size:15px;font-weight:normal;font-style:normal;fill:#a9a9a9;stroke:#a9a9a9;stroke-width:0.12px;">SimpleCard.js</text></svg>
<svg style="left:897.60px;top:79.00px" width="82.1" height="24.0"><text x="0" y="18.00" textLength="80.08" lengthAdjust="spacingAndGlyphs" style="font-family:'Liberation Sans';font-size:15px;font-weight:normal;font-style:normal;fill:#a9a9a9;stroke:#a9a9a9;stroke-width:0.12px;">SimpleCard</text></svg>
<svg style="left:411px;top:85.5px" width="7" height="12" viewBox="0 0 7 12"><path d="M0.6 0.6 L6.2 6 L0.6 11.4" fill="none" stroke="#a9a9a9" stroke-width="1.2"/></svg>
<svg style="left:516px;top:85.5px" width="7" height="12" viewBox="0 0 7 12"><path d="M0.6 0.6 L6.2 6 L0.6 11.4" fill="none" stroke="#a9a9a9" stroke-width="1.2"/></svg>
<svg style="left:627.5px;top:85.5px" width="7" height="12" viewBox="0 0 7 12"><path d="M0.6 0.6 L6.2 6 L0.6 11.4" fill="none" stroke="#a9a9a9" stroke-width="1.2"/></svg>
<svg style="left:725.5px;top:85.5px" width="7" height="12" viewBox="0 0 7 12"><path d="M0.6 0.6 L6.2 6 L0.6 11.4" fill="none" stroke="#a9a9a9" stroke-width="1.2"/></svg>
<svg style="left:862.7px;top:85.5px" width="7" height="12" viewBox="0 0 7 12"><path d="M0.6 0.6 L6.2 6 L0.6 11.4" fill="none" stroke="#a9a9a9" stroke-width="1.2"/></svg>
<svg style="left:742.84px;top:80.14px" width="14.6" height="20.5"><text x="0" y="15.36" textLength="12.56" lengthAdjust="spacingAndGlyphs" style="font-family:'Liberation Sans';font-size:12.8px;font-weight:bold;font-style:normal;fill:#cbcb41;stroke:#cbcb41;stroke-width:0.12px;">JS</text></svg>
<svg style="left:876.5px;top:85.5px" width="17" height="12" viewBox="0 0 17 12" fill="none" stroke="#75beff" stroke-width="1.3">
<path d="M3 0.7 H0.8 V11.3 H3 M14 0.7 H16.2 V11.3 H14"/><rect x="4.6" y="3.6" width="7.8" height="4.8" rx="2.2" transform="rotate(-22 8.5 6)"/><path d="M7.2 7.6 L10.2 4.4"/></svg>
<div class="a" style="left:448.00px;top:217.0px;width:1px;height:798.0px;background:#404040"></div>
<div class="a" style="left:466.46px;top:217.0px;width:1px;height:798.0px;background:#404040"></div>
<div class="a" style="left:484.93px;top:353.8px;width:1px;height:661.2px;background:#404040"></div>
<div class="a" style="left:503.39px;top:353.8px;width:1px;height:661.2px;background:#404040"></div>
<div class="a" style="left:521.86px;top:445.0px;width:1px;height:68.4px;background:#404040"></div>
<div class="a" style="left:521.86px;top:718.6px;width:1px;height:45.6px;background:#404040"></div>
<div class="a" style="left:521.86px;top:832.6px;width:1px;height:91.2px;background:#404040"></div>
<div class="a" style="left:521.86px;top:946.6px;width:1px;height:68.4px;background:#404040"></div>
<div class="t" style="top:104.6px;width:40px;text-align:right;font-family:'Liberation Mono', monospace;font-size:16.2px;line-height:22.8px;color:#858585;left:377px;letter-spacing:-0.6px">1</div>
<div class="t" style="left:448.00px;top:104.8px;font-family:'Liberation Mono', monospace;font-size:15.384px;line-height:22.8px"><span style="color:#c586c0">import</span><span style="color:#d4d4d4"> </span><span style="color:#9cdcfe">React</span><span style="color:#d4d4d4"> </span><span style="color:#c586c0">from</span><span style="color:#d4d4d4"> </span><span style="color:#ce9178">&#x27;react&#x27;</span><span style="color:#d4d4d4">;</span></div>
<div class="t" style="top:127.4px;width:40px;text-align:right;font-family:'Liberation Mono', monospace;font-size:16.2px;line-height:22.8px;color:#858585;left:377px;letter-spacing:-0.6px">2</div>
<div class="t" style="left:448.00px;top:127.6px;font-family:'Liberation Mono', monospace;font-size:15.384px;line-height:22.8px"><span style="color:#c586c0">import</span><span style="color:#d4d4d4"> {</span><span style="color:#9cdcfe">CardElement</span><span style="color:#d4d4d4">, </span><span style="color:#9cdcfe">useStripe</span><span style="color:#d4d4d4">, </span><span style="color:#9cdcfe">useElements</span><span style="color:#d4d4d4">} </span><span style="color:#c586c0">from</span><span style="color:#d4d4d4"> </span><span style="color:#ce9178">&#x27;@stripe/react-stripe-js&#x27;</span><span style="color:#d4d4d4">;</span></div>
<div class="t" style="top:150.2px;width:40px;text-align:right;font-family:'Liberation Mono', monospace;font-size:16.2px;line-height:22.8px;color:#858585;left:377px;letter-spacing:-0.6px">3</div>
<div class="t" style="left:448.00px;top:150.4px;font-family:'Liberation Mono', monospace;font-size:15.384px;line-height:22.8px"><span style="color:#c586c0">import</span><span style="color:#d4d4d4"> { </span><span style="color:#9cdcfe">useState</span><span style="color:#d4d4d4"> } </span><span style="color:#c586c0">from</span><span style="color:#d4d4d4"> </span><span style="color:#ce9178">&#x27;react&#x27;</span><span style="color:#d4d4d4">;</span></div>
<div class="t" style="top:173.0px;width:40px;text-align:right;font-family:'Liberation Mono', monospace;font-size:16.2px;line-height:22.8px;color:#858585;left:377px;letter-spacing:-0.6px">4</div>
<div class="t" style="top:195.8px;width:40px;text-align:right;font-family:'Liberation Mono', monospace;font-size:16.2px;line-height:22.8px;color:#858585;left:377px;letter-spacing:-0.6px">5</div>
<div class="t" style="left:448.00px;top:196.0px;font-family:'Liberation Mono', monospace;font-size:15.384px;line-height:22.8px"><span style="color:#569cd6">const</span><span style="color:#d4d4d4"> </span><span style="color:#dcdcaa">SimpleCard</span><span style="color:#d4d4d4"> = () </span><span style="color:#569cd6">=&gt;</span><span style="color:#d4d4d4"> {</span></div>
<div class="t" style="top:218.6px;width:40px;text-align:right;font-family:'Liberation Mono', monospace;font-size:16.2px;line-height:22.8px;color:#858585;left:377px;letter-spacing:-0.6px">6</div>
<div class="t" style="left:484.93px;top:218.8px;font-family:'Liberation Mono', monospace;font-size:15.384px;line-height:22.8px"><span style="color:#569cd6">const</span><span style="color:#d4d4d4"> </span><span style="color:#4fc1ff">stripe</span><span style="color:#d4d4d4"> = </span><span style="color:#dcdcaa">useStripe</span><span style="color:#d4d4d4">();</span></div>
<div class="t" style="top:241.4px;width:40px;text-align:right;font-family:'Liberation Mono', monospace;font-size:16.2px;line-height:22.8px;color:#858585;left:377px;letter-spacing:-0.6px">7</div>
<div class="t" style="left:484.93px;top:241.6px;font-family:'Liberation Mono', monospace;font-size:15.384px;line-height:22.8px"><span style="color:#569cd6">const</span><span style="color:#d4d4d4"> </span><span style="color:#4fc1ff">elements</span><span style="color:#d4d4d4"> = </span><span style="color:#dcdcaa">useElements</span><span style="color:#d4d4d4">();</span></div>
<div class="t" style="top:264.2px;width:40px;text-align:right;font-family:'Liberation Mono', monospace;font-size:16.2px;line-height:22.8px;color:#858585;left:377px;letter-spacing:-0.6px">8</div>
<div class="t" style="left:484.93px;top:264.4px;font-family:'Liberation Mono', monospace;font-size:15.384px;line-height:22.8px"><span style="color:#569cd6">const</span><span style="color:#d4d4d4"> [</span><span style="color:#4fc1ff">paymenterror</span><span style="color:#d4d4d4">,</span><span style="color:#dcdcaa">setPaymentError</span><span style="color:#d4d4d4">] = </span><span style="color:#dcdcaa">useState</span><span style="color:#d4d4d4">(</span><span style="color:#569cd6">null</span><span style="color:#d4d4d4">)</span></div>
<div class="t" style="top:287.0px;width:40px;text-align:right;font-family:'Liberation Mono', monospace;font-size:16.2px;line-height:22.8px;color:#858585;left:377px;letter-spacing:-0.6px">9</div>
<div class="t" style="left:484.93px;top:287.2px;font-family:'Liberation Mono', monospace;font-size:15.384px;line-height:22.8px"><span style="color:#569cd6">const</span><span style="color:#d4d4d4"> [</span><span style="color:#4fc1ff">paymentsuccess</span><span style="color:#d4d4d4">, </span><span style="color:#dcdcaa">setPaymentSuccess</span><span style="color:#d4d4d4">] = </span><span style="color:#dcdcaa">useState</span><span style="color:#d4d4d4">(</span><span style="color:#569cd6">null</span><span style="color:#d4d4d4">)</span></div>
<div class="t" style="top:309.8px;width:40px;text-align:right;font-family:'Liberation Mono', monospace;font-size:16.2px;line-height:22.8px;color:#858585;left:377px;letter-spacing:-0.6px">10</div>
<div class="t" style="top:332.6px;width:40px;text-align:right;font-family:'Liberation Mono', monospace;font-size:16.2px;line-height:22.8px;color:#858585;left:377px;letter-spacing:-0.6px">11</div>
<div class="t" style="left:484.93px;top:332.8px;font-family:'Liberation Mono', monospace;font-size:15.384px;line-height:22.8px"><span style="color:#569cd6">const</span><span style="color:#d4d4d4"> </span><span style="color:#dcdcaa">handleSubmit</span><span style="color:#d4d4d4"> = </span><span style="color:#569cd6">async</span><span style="color:#d4d4d4"> (</span><span style="color:#9cdcfe">event</span><span style="color:#d4d4d4">) </span><span style="color:#569cd6">=&gt;</span><span style="color:#d4d4d4"> {</span></div>
<div class="t" style="top:355.4px;width:40px;text-align:right;font-family:'Liberation Mono', monospace;font-size:16.2px;line-height:22.8px;color:#858585;left:377px;letter-spacing:-0.6px">12</div>
<div class="t" style="left:521.86px;top:355.6px;font-family:'Liberation Mono', monospace;font-size:15.384px;line-height:22.8px"><span style="color:#6a9955">// Block native form submission.</span></div>
<div class="t" style="top:378.2px;width:40px;text-align:right;font-family:'Liberation Mono', monospace;font-size:16.2px;line-height:22.8px;color:#858585;left:377px;letter-spacing:-0.6px">13</div>
<div class="t" style="left:521.86px;top:378.4px;font-family:'Liberation Mono', monospace;font-size:15.384px;line-height:22.8px"><span style="color:#9cdcfe">event</span><span style="color:#d4d4d4">.</span><span style="color:#dcdcaa">preventDefault</span><span style="color:#d4d4d4">();</span></div>
<div class="t" style="top:401.0px;width:40px;text-align:right;font-family:'Liberation Mono', monospace;font-size:16.2px;line-height:22.8px;color:#858585;left:377px;letter-spacing:-0.6px">14</div>
<div class="t" style="top:423.8px;width:40px;text-align:right;font-family:'Liberation Mono', monospace;font-size:16.2px;line-height:22.8px;color:#858585;left:377px;letter-spacing:-0.6px">15</div>
<div class="t" style="left:521.86px;top:424.0px;font-family:'Liberation Mono', monospace;font-size:15.384px;line-height:22.8px"><span style="color:#c586c0">if</span><span style="color:#d4d4d4"> (!</span><span style="color:#4fc1ff">stripe</span><span style="color:#d4d4d4"> || !</span><span style="color:#4fc1ff">elements</span><span style="color:#d4d4d4">) {</span></div>
<div class="t" style="top:446.6px;width:40px;text-align:right;font-family:'Liberation Mono', monospace;font-size:16.2px;line-height:22.8px;color:#858585;left:377px;letter-spacing:-0.6px">16</div>
<div class="t" style="left:540.32px;top:446.8px;font-family:'Liberation Mono', monospace;font-size:15.384px;line-height:22.8px"><span style="color:#6a9955">// Stripe.js has not loaded yet. Make sure to disable</span></div>
<div class="t" style="top:469.4px;width:40px;text-align:right;font-family:'Liberation Mono', monospace;font-size:16.2px;line-height:22.8px;color:#858585;left:377px;letter-spacing:-0.6px">17</div>
<div class="t" style="left:540.32px;top:469.6px;font-family:'Liberation Mono', monospace;font-size:15.384px;line-height:22.8px"><span style="color:#6a9955">// form submission until Stripe.js has loaded.</span></div>
<div class="t" style="top:492.2px;width:40px;text-align:right;font-family:'Liberation Mono', monospace;font-size:16.2px;line-height:22.8px;color:#858585;left:377px;letter-spacing:-0.6px">18</div>
<div class="t" style="left:540.32px;top:492.4px;font-family:'Liberation Mono', monospace;font-size:15.384px;line-height:22.8px"><span style="color:#c586c0">return</span><span style="color:#d4d4d4">;</span></div>
<div class="t" style="top:515.0px;width:40px;text-align:right;font-family:'Liberation Mono', monospace;font-size:16.2px;line-height:22.8px;color:#858585;left:377px;letter-spacing:-0.6px">19</div>
<div class="t" style="left:521.86px;top:515.2px;font-family:'Liberation Mono', monospace;font-size:15.384px;line-height:22.8px"><span style="color:#d4d4d4">}</span></div>
<div class="t" style="top:537.8px;width:40px;text-align:right;font-family:'Liberation Mono', monospace;font-size:16.2px;line-height:22.8px;color:#858585;left:377px;letter-spacing:-0.6px">20</div>
<div class="t" style="top:560.6px;width:40px;text-align:right;font-family:'Liberation Mono', monospace;font-size:16.2px;line-height:22.8px;color:#858585;left:377px;letter-spacing:-0.6px">21</div>
<div class="t" style="left:521.86px;top:560.8px;font-family:'Liberation Mono', monospace;font-size:15.384px;line-height:22.8px"><span style="color:#6a9955">// Get a reference to a mounted CardElement. Elements knows how</span></div>
<div class="t" style="top:583.4px;width:40px;text-align:right;font-family:'Liberation Mono', monospace;font-size:16.2px;line-height:22.8px;color:#858585;left:377px;letter-spacing:-0.6px">22</div>
<div class="t" style="left:521.86px;top:583.6px;font-family:'Liberation Mono', monospace;font-size:15.384px;line-height:22.8px"><span style="color:#6a9955">// to find your CardElement because there can only ever be one of</span></div>
<div class="t" style="top:606.2px;width:40px;text-align:right;font-family:'Liberation Mono', monospace;font-size:16.2px;line-height:22.8px;color:#858585;left:377px;letter-spacing:-0.6px">23</div>
<div class="t" style="left:521.86px;top:606.4px;font-family:'Liberation Mono', monospace;font-size:15.384px;line-height:22.8px"><span style="color:#6a9955">// each type of element.</span></div>
<div class="t" style="top:629.0px;width:40px;text-align:right;font-family:'Liberation Mono', monospace;font-size:16.2px;line-height:22.8px;color:#858585;left:377px;letter-spacing:-0.6px">24</div>
<div class="t" style="left:521.86px;top:629.2px;font-family:'Liberation Mono', monospace;font-size:15.384px;line-height:22.8px"><span style="color:#569cd6">const</span><span style="color:#d4d4d4"> </span><span style="color:#4fc1ff">cardElement</span><span style="color:#d4d4d4"> = </span><span style="color:#4fc1ff">elements</span><span style="color:#d4d4d4">.</span><span style="color:#dcdcaa">getElement</span><span style="color:#d4d4d4">(</span><span style="color:#4fc1ff">CardElement</span><span style="color:#d4d4d4">);</span></div>
<div class="t" style="top:651.8px;width:40px;text-align:right;font-family:'Liberation Mono', monospace;font-size:16.2px;line-height:22.8px;color:#858585;left:377px;letter-spacing:-0.6px">25</div>
<div class="t" style="top:674.6px;width:40px;text-align:right;font-family:'Liberation Mono', monospace;font-size:16.2px;line-height:22.8px;color:#858585;left:377px;letter-spacing:-0.6px">26</div>
<div class="t" style="left:521.86px;top:674.8px;font-family:'Liberation Mono', monospace;font-size:15.384px;line-height:22.8px"><span style="color:#6a9955">// Use your card Element with other Stripe.js APIs</span></div>
<div class="t" style="top:697.4px;width:40px;text-align:right;font-family:'Liberation Mono', monospace;font-size:16.2px;line-height:22.8px;color:#858585;left:377px;letter-spacing:-0.6px">27</div>
<div class="t" style="left:521.86px;top:697.6px;font-family:'Liberation Mono', monospace;font-size:15.384px;line-height:22.8px"><span style="color:#569cd6">const</span><span style="color:#d4d4d4"> {</span><span style="color:#4fc1ff">error</span><span style="color:#d4d4d4">, </span><span style="color:#4fc1ff">paymentMethod</span><span style="color:#d4d4d4">} = </span><span style="color:#c586c0">await</span><span style="color:#d4d4d4"> </span><span style="color:#4fc1ff">stripe</span><span style="color:#d4d4d4">.</span><span style="color:#dcdcaa">createPaymentMethod</span><span style="color:#d4d4d4">({</span></div>
<div class="t" style="top:720.2px;width:40px;text-align:right;font-family:'Liberation Mono', monospace;font-size:16.2px;line-height:22.8px;color:#858585;left:377px;letter-spacing:-0.6px">28</div>
<div class="t" style="left:540.32px;top:720.4px;font-family:'Liberation Mono', monospace;font-size:15.384px;line-height:22.8px"><span style="color:#9cdcfe">type</span><span style="color:#d4d4d4">: </span><span style="color:#ce9178">&#x27;card&#x27;</span><span style="color:#d4d4d4">,</span></div>
<div class="t" style="top:743.0px;width:40px;text-align:right;font-family:'Liberation Mono', monospace;font-size:16.2px;line-height:22.8px;color:#858585;left:377px;letter-spacing:-0.6px">29</div>
<div class="t" style="left:540.32px;top:743.2px;font-family:'Liberation Mono', monospace;font-size:15.384px;line-height:22.8px"><span style="color:#9cdcfe">card</span><span style="color:#d4d4d4">: </span><span style="color:#4fc1ff">cardElement</span><span style="color:#d4d4d4">,</span></div>
<div class="t" style="top:765.8px;width:40px;text-align:right;font-family:'Liberation Mono', monospace;font-size:16.2px;line-height:22.8px;color:#858585;left:377px;letter-spacing:-0.6px">30</div>
<div class="t" style="left:521.86px;top:766.0px;font-family:'Liberation Mono', monospace;font-size:15.384px;line-height:22.8px"><span style="color:#d4d4d4">});</span></div>
<div class="t" style="top:788.6px;width:40px;text-align:right;font-family:'Liberation Mono', monospace;font-size:16.2px;line-height:22.8px;color:#858585;left:377px;letter-spacing:-0.6px">31</div>
<div class="t" style="top:811.4px;width:40px;text-align:right;font-family:'Liberation Mono', monospace;font-size:16.2px;line-height:22.8px;color:#858585;left:377px;letter-spacing:-0.6px">32</div>
<div class="t" style="left:521.86px;top:811.6px;font-family:'Liberation Mono', monospace;font-size:15.384px;line-height:22.8px"><span style="color:#c586c0">if</span><span style="color:#d4d4d4"> (</span><span style="color:#4fc1ff">error</span><span style="color:#d4d4d4">) {</span></div>
<div class="t" style="top:834.2px;width:40px;text-align:right;font-family:'Liberation Mono', monospace;font-size:16.2px;line-height:22.8px;color:#858585;left:377px;letter-spacing:-0.6px">33</div>
<div class="t" style="left:540.32px;top:834.4px;font-family:'Liberation Mono', monospace;font-size:15.384px;line-height:22.8px"><span style="color:#9cdcfe">console</span><span style="color:#d4d4d4">.</span><span style="color:#dcdcaa">log</span><span style="color:#d4d4d4">(</span><span style="color:#ce9178">&#x27;[error]&#x27;</span><span style="color:#d4d4d4">, </span><span style="color:#4fc1ff">error</span><span style="color:#d4d4d4">);</span></div>
<div class="t" style="top:857.0px;width:40px;text-align:right;font-family:'Liberation Mono', monospace;font-size:16.2px;line-height:22.8px;color:#858585;left:377px;letter-spacing:-0.6px">34</div>
<div class="t" style="left:540.32px;top:857.2px;font-family:'Liberation Mono', monospace;font-size:15.384px;line-height:22.8px"><span style="color:#dcdcaa">setPaymentError</span><span style="color:#d4d4d4">(</span><span style="color:#4fc1ff">error</span><span style="color:#d4d4d4">.</span><span style="color:#9cdcfe">message</span><span style="color:#d4d4d4">);</span></div>
<div class="t" style="top:879.8px;width:40px;text-align:right;font-family:'Liberation Mono', monospace;font-size:16.2px;line-height:22.8px;color:#858585;left:377px;letter-spacing:-0.6px">35</div>
<div class="t" style="left:540.32px;top:880.0px;font-family:'Liberation Mono', monospace;font-size:15.384px;line-height:22.8px"><span style="color:#dcdcaa">setPaymentSuccess</span><span style="color:#d4d4d4">(</span><span style="color:#569cd6">null</span><span style="color:#d4d4d4">);</span></div>
<div class="t" style="top:902.6px;width:40px;text-align:right;font-family:'Liberation Mono', monospace;font-size:16.2px;line-height:22.8px;color:#858585;left:377px;letter-spacing:-0.6px">36</div>
<div class="t" style="top:925.4px;width:40px;text-align:right;font-family:'Liberation Mono', monospace;font-size:16.2px;line-height:22.8px;color:#858585;left:377px;letter-spacing:-0.6px">37</div>
<div class="t" style="left:521.86px;top:925.6px;font-family:'Liberation Mono', monospace;font-size:15.384px;line-height:22.8px"><span style="color:#d4d4d4">}</span><span style="color:#d4d4d4"> </span><span style="color:#c586c0">else</span><span style="color:#d4d4d4"> {</span></div>
<div class="t" style="top:948.2px;width:40px;text-align:right;font-family:'Liberation Mono', monospace;font-size:16.2px;line-height:22.8px;color:#858585;left:377px;letter-spacing:-0.6px">38</div>
<div class="t" style="left:540.32px;top:948.4px;font-family:'Liberation Mono', monospace;font-size:15.384px;line-height:22.8px"><span style="color:#9cdcfe">console</span><span style="color:#d4d4d4">.</span><span style="color:#dcdcaa">log</span><span style="color:#d4d4d4">(</span><span style="color:#ce9178">&#x27;[PaymentMethod]&#x27;</span><span style="color:#d4d4d4">, </span><span style="color:#4fc1ff">paymentMethod</span><span style="color:#d4d4d4">);</span></div>
<div class="t" style="top:971.0px;width:40px;text-align:right;font-family:'Liberation Mono', monospace;font-size:16.2px;line-height:22.8px;color:#858585;left:377px;letter-spacing:-0.6px">39</div>
<div class="t" style="left:540.32px;top:971.2px;font-family:'Liberation Mono', monospace;font-size:15.384px;line-height:22.8px"><span style="color:#dcdcaa">setPaymentSuccess</span><span style="color:#d4d4d4">(</span><span style="color:#4fc1ff">paymentMethod</span><span style="color:#d4d4d4">.</span><span style="color:#9cdcfe">id</span><span style="color:#d4d4d4">);</span></div>
<div class="t" style="top:993.8px;width:40px;text-align:right;font-family:'Liberation Mono', monospace;font-size:16.2px;line-height:22.8px;color:#858585;left:377px;letter-spacing:-0.6px">40</div>
<div class="t" style="left:540.32px;top:994.0px;font-family:'Liberation Mono', monospace;font-size:15.384px;line-height:22.8px"><span style="color:#dcdcaa">setPaymentError</span><span style="color:#d4d4d4">(</span><span style="color:#569cd6">null</span><span style="color:#d4d4d4">);</span></div>
<div class="a" style="left:1903px;top:103px;width:1px;height:911px;background:#393939"></div>
<div class="a" style="left:1903px;top:104px;width:17px;height:363px;background:rgba(121,121,121,0.4)"></div>
<div class="a" style="left:1904px;top:504px;width:16px;height:1.6px;background:#999999"></div>
<div class="a" style="left:1909px;top:505px;width:6px;height:8px;background:#8f8f8f"></div>
<div class="a" style="left:1909px;top:549.5px;width:6px;height:9px;background:#8f8f8f"></div>
<div class="a" style="left:1792px;top:192px;width:111px;height:2px;background:#1d3a58"></div>
<div class="a" style="left:1792.0px;top:104.0px;width:6.0px;height:1.4px;background:#c586c0;opacity:0.4"></div>
<div class="a" style="left:1799.0px;top:104.0px;width:5.0px;height:1.4px;background:#9cdcfe;opacity:0.4"></div>
<div class="a" style="left:1805.0px;top:104.0px;width:4.0px;height:1.4px;background:#c586c0;opacity:0.4"></div>
<div class="a" style="left:1810.0px;top:104.0px;width:7.0px;height:1.4px;background:#ce9178;opacity:0.4"></div>
<div class="a" style="left:1817.0px;top:104.0px;width:1.0px;height:1.4px;background:#d4d4d4;opacity:0.4"></div>
<div class="a" style="left:1792.0px;top:106.0px;width:6.0px;height:1.4px;background:#c586c0;opacity:0.4"></div>
<div class="a" style="left:1799.0px;top:106.0px;width:1.0px;height:1.4px;background:#d4d4d4;opacity:0.4"></div>
<div class="a" style="left:1800.0px;top:106.0px;width:11.0px;height:1.4px;background:#9cdcfe;opacity:0.4"></div>
<div class="a" style="left:1811.0px;top:106.0px;width:1.0px;height:1.4px;background:#d4d4d4;opacity:0.4"></div>
<div class="a" style="left:1813.0px;top:106.0px;width:9.0px;height:1.4px;background:#9cdcfe;opacity:0.4"></div>
<div class="a" style="left:1822.0px;top:106.0px;width:1.0px;height:1.4px;background:#d4d4d4;opacity:0.4"></div>
<div class="a" style="left:1824.0px;top:106.0px;width:11.0px;height:1.4px;background:#9cdcfe;opacity:0.4"></div>
<div class="a" style="left:1835.0px;top:106.0px;width:1.0px;height:1.4px;background:#d4d4d4;opacity:0.4"></div>
<div class="a" style="left:1837.0px;top:106.0px;width:4.0px;height:1.4px;background:#c586c0;opacity:0.4"></div>
<div class="a" style="left:1842.0px;top:106.0px;width:25.0px;height:1.4px;background:#ce9178;opacity:0.4"></div>
<div class="a" style="left:1867.0px;top:106.0px;width:1.0px;height:1.4px;background:#d4d4d4;opacity:0.4"></div>
<div class="a" style="left:1792.0px;top:108.0px;width:6.0px;height:1.4px;background:#c586c0;opacity:0.4"></div>
<div class="a" style="left:1799.0px;top:108.0px;width:1.0px;height:1.4px;background:#d4d4d4;opacity:0.4"></div>
<div class="a" style="left:1801.0px;top:108.0px;width:8.0px;height:1.4px;background:#9cdcfe;opacity:0.4"></div>
<div class="a" style="left:1810.0px;top:108.0px;width:1.0px;height:1.4px;background:#d4d4d4;opacity:0.4"></div>
<div class="a" style="left:1812.0px;top:108.0px;width:4.0px;height:1.4px;background:#c586c0;opacity:0.4"></div>
<div class="a" style="left:1817.0px;top:108.0px;width:7.0px;height:1.4px;background:#ce9178;opacity:0.4"></div>
<div class="a" style="left:1824.0px;top:108.0px;width:1.0px;height:1.4px;background:#d4d4d4;opacity:0.4"></div>
<div class="a" style="left:1792.0px;top:112.0px;width:5.0px;height:1.4px;background:#569cd6;opacity:0.4"></div>
<div class="a" style="left:1798.0px;top:112.0px;width:10.0px;height:1.4px;background:#dcdcaa;opacity:0.4"></div>
<div class="a" style="left:1809.0px;top:112.0px;width:1.0px;height:1.4px;background:#d4d4d4;opacity:0.4"></div>
<div class="a" style="left:1811.0px;top:112.0px;width:2.0px;height:1.4px;background:#d4d4d4;opacity:0.4"></div>
<div class="a" style="left:1814.0px;top:112.0px;width:2.0px;height:1.4px;background:#569cd6;opacity:0.4"></div>
<div class="a" style="left:1817.0px;top:112.0px;width:1.0px;height:1.4px;background:#d4d4d4;opacity:0.4"></div>
<div class="a" style="left:1796.0px;top:114.0px;width:5.0px;height:1.4px;background:#569cd6;opacity:0.4"></div>
<div class="a" style="left:1802.0px;top:114.0px;width:6.0px;height:1.4px;background:#4fc1ff;opacity:0.4"></div>
<div class="a" style="left:1809.0px;top:114.0px;width:1.0px;height:1.4px;background:#d4d4d4;opacity:0.4"></div>
<div class="a" style="left:1811.0px;top:114.0px;width:9.0px;height:1.4px;background:#dcdcaa;opacity:0.4"></div>
<div class="a" style="left:1820.0px;top:114.0px;width:3.0px;height:1.4px;background:#d4d4d4;opacity:0.4"></div>
<div class="a" style="left:1796.0px;top:116.0px;width:5.0px;height:1.4px;background:#569cd6;opacity:0.4"></div>
<div class="a" style="left:1802.0px;top:116.0px;width:8.0px;height:1.4px;background:#4fc1ff;opacity:0.4"></div>
<div class="a" style="left:1811.0px;top:116.0px;width:1.0px;height:1.4px;background:#d4d4d4;opacity:0.4"></div>
<div class="a" style="left:1813.0px;top:116.0px;width:11.0px;height:1.4px;background:#dcdcaa;opacity:0.4"></div>
<div class="a" style="left:1824.0px;top:116.0px;width:3.0px;height:1.4px;background:#d4d4d4;opacity:0.4"></div>
<div class="a" style="left:1796.0px;top:118.0px;width:5.0px;height:1.4px;background:#569cd6;opacity:0.4"></div>
<div class="a" style="left:1802.0px;top:118.0px;width:1.0px;height:1.4px;background:#d4d4d4;opacity:0.4"></div>
<div class="a" style="left:1803.0px;top:118.0px;width:12.0px;height:1.4px;background:#4fc1ff;opacity:0.4"></div>
<div class="a" style="left:1815.0px;top:118.0px;width:1.0px;height:1.4px;background:#d4d4d4;opacity:0.4"></div>
<div class="a" style="left:1816.0px;top:118.0px;width:15.0px;height:1.4px;background:#dcdcaa;opacity:0.4"></div>
<div class="a" style="left:1831.0px;top:118.0px;width:1.0px;height:1.4px;background:#d4d4d4;opacity:0.4"></div>
<div class="a" style="left:1833.0px;top:118.0px;width:1.0px;height:1.4px;background:#d4d4d4;opacity:0.4"></div>
<div class="a" style="left:1835.0px;top:118.0px;width:8.0px;height:1.4px;background:#dcdcaa;opacity:0.4"></div>
<div class="a" style="left:1843.0px;top:118.0px;width:1.0px;height:1.4px;background:#d4d4d4;opacity:0.4"></div>
<div class="a" style="left:1844.0px;top:118.0px;width:4.0px;height:1.4px;background:#569cd6;opacity:0.4"></div>
<div class="a" style="left:1848.0px;top:118.0px;width:1.0px;height:1.4px;background:#d4d4d4;opacity:0.4"></div>
<div class="a" style="left:1796.0px;top:120.0px;width:5.0px;height:1.4px;background:#569cd6;opacity:0.4"></div>
<div class="a" style="left:1802.0px;top:120.0px;width:1.0px;height:1.4px;background:#d4d4d4;opacity:0.4"></div>
<div class="a" style="left:1803.0px;top:120.0px;width:14.0px;height:1.4px;background:#4fc1ff;opacity:0.4"></div>
<div class="a" style="left:1817.0px;top:120.0px;width:1.0px;height:1.4px;background:#d4d4d4;opacity:0.4"></div>
<div class="a" style="left:1819.0px;top:120.0px;width:17.0px;height:1.4px;background:#dcdcaa;opacity:0.4"></div>
<div class="a" style="left:1836.0px;top:120.0px;width:1.0px;height:1.4px;background:#d4d4d4;opacity:0.4"></div>
<div class="a" style="left:1838.0px;top:120.0px;width:1.0px;height:1.4px;background:#d4d4d4;opacity:0.4"></div>
<div class="a" style="left:1840.0px;top:120.0px;width:8.0px;height:1.4px;background:#dcdcaa;opacity:0.4"></div>
<div class="a" style="left:1848.0px;top:120.0px;width:1.0px;height:1.4px;background:#d4d4d4;opacity:0.4"></div>
<div class="a" style="left:1849.0px;top:120.0px;width:4.0px;height:1.4px;background:#569cd6;opacity:0.4"></div>
<div class="a" style="left:1853.0px;top:120.0px;width:1.0px;height:1.4px;background:#d4d4d4;opacity:0.4"></div>
<div class="a" style="left:1796.0px;top:124.0px;width:5.0px;height:1.4px;background:#569cd6;opacity:0.4"></div>
<div class="a" style="left:1802.0px;top:124.0px;width:12.0px;height:1.4px;background:#dcdcaa;opacity:0.4"></div>
<div class="a" style="left:1815.0px;top:124.0px;width:1.0px;height:1.4px;background:#d4d4d4;opacity:0.4"></div>
<div class="a" style="left:1817.0px;top:124.0px;width:5.0px;height:1.4px;background:#569cd6;opacity:0.4"></div>
<div class="a" style="left:1823.0px;top:124.0px;width:1.0px;height:1.4px;background:#d4d4d4;opacity:0.4"></div>
<div class="a" style="left:1824.0px;top:124.0px;width:5.0px;height:1.4px;background:#9cdcfe;opacity:0.4"></div>
<div class="a" style="left:1829.0px;top:124.0px;width:1.0px;height:1.4px;background:#d4d4d4;opacity:0.4"></div>
<div class="a" style="left:1831.0px;top:124.0px;width:2.0px;height:1.4px;background:#569cd6;opacity:0.4"></div>
<div class="a" style="left:1834.0px;top:124.0px;width:1.0px;height:1.4px;background:#d4d4d4;opacity:0.4"></div>
<div class="a" style="left:1800.0px;top:126.0px;width:2.0px;height:1.4px;background:#6a9955;opacity:0.4"></div>
<div class="a" style="left:1803.0px;top:126.0px;width:5.0px;height:1.4px;background:#6a9955;opacity:0.4"></div>
<div class="a" style="left:1809.0px;top:126.0px;width:6.0px;height:1.4px;background:#6a9955;opacity:0.4"></div>
<div class="a" style="left:1816.0px;top:126.0px;width:4.0px;height:1.4px;background:#6a9955;opacity:0.4"></div>
<div class="a" style="left:1821.0px;top:126.0px;width:11.0px;height:1.4px;background:#6a9955;opacity:0.4"></div>
<div class="a" style="left:1800.0px;top:128.0px;width:5.0px;height:1.4px;background:#9cdcfe;opacity:0.4"></div>
<div class="a" style="left:1805.0px;top:128.0px;width:1.0px;height:1.4px;background:#d4d4d4;opacity:0.4"></div>
<div class="a" style="left:1806.0px;top:128.0px;width:14.0px;height:1.4px;background:#dcdcaa;opacity:0.4"></div>
<div class="a" style="left:1820.0px;top:128.0px;width:3.0px;height:1.4px;background:#d4d4d4;opacity:0.4"></div>
<div class="a" style="left:1800.0px;top:132.0px;width:2.0px;height:1.4px;background:#c586c0;opacity:0.4"></div>
<div class="a" style="left:1803.0px;top:132.0px;width:2.0px;height:1.4px;background:#d4d4d4;opacity:0.4"></div>
<div class="a" style="left:1805.0px;top:132.0px;width:6.0px;height:1.4px;background:#4fc1ff;opacity:0.4"></div>
<div class="a" style="left:1812.0px;top:132.0px;width:2.0px;height:1.4px;background:#d4d4d4;opacity:0.4"></div>
<div class="a" style="left:1815.0px;top:132.0px;width:1.0px;height:1.4px;background:#d4d4d4;opacity:0.4"></div>
<div class="a" style="left:1816.0px;top:132.0px;width:8.0px;height:1.4px;background:#4fc1ff;opacity:0.4"></div>
<div class="a" style="left:1824.0px;top:132.0px;width:1.0px;height:1.4px;background:#d4d4d4;opacity:0.4"></div>
<div class="a" style="left:1826.0px;top:132.0px;width:1.0px;height:1.4px;background:#d4d4d4;opacity:0.4"></div>
<div class="a" style="left:1802.0px;top:134.0px;width:2.0px;height:1.4px;background:#6a9955;opacity:0.4"></div>
<div class="a" style="left:1805.0px;top:134.0px;width:9.0px;height:1.4px;background:#6a9955;opacity:0.4"></div>
<div class="a" style="left:1815.0px;top:134.0px;width:3.0px;height:1.4px;background:#6a9955;opacity:0.4"></div>
<div class="a" style="left:1819.0px;top:134.0px;width:3.0px;height:1.4px;background:#6a9955;opacity:0.4"></div>
<div class="a" style="left:1823.0px;top:134.0px;width:6.0px;height:1.4px;background:#6a9955;opacity:0.4"></div>
<div class="a" style="left:1830.0px;top:134.0px;width:4.0px;height:1.4px;background:#6a9955;opacity:0.4"></div>
<div class="a" style="left:1835.0px;top:134.0px;width:4.0px;height:1.4px;background:#6a9955;opacity:0.4"></div>
<div class="a" style="left:1840.0px;top:134.0px;width:4.0px;height:1.4px;background:#6a9955;opacity:0.4"></div>
<div class="a" style="left:1845.0px;top:134.0px;width:2.0px;height:1.4px;background:#6a9955;opacity:0.4"></div>
<div class="a" style="left:1848.0px;top:134.0px;width:7.0px;height:1.4px;background:#6a9955;opacity:0.4"></div>
<div class="a" style="left:1802.0px;top:136.0px;width:2.0px;height:1.4px;background:#6a9955;opacity:0.4"></div>
<div class="a" style="left:1805.0px;top:136.0px;width:4.0px;height:1.4px;background:#6a9955;opacity:0.4"></div>
<div class="a" style="left:1810.0px;top:136.0px;width:10.0px;height:1.4px;background:#6a9955;opacity:0.4"></div>
<div class="a" style="left:1821.0px;top:136.0px;width:5.0px;height:1.4px;background:#6a9955;opacity:0.4"></div>
<div class="a" style="left:1827.0px;top:136.0px;width:9.0px;height:1.4px;background:#6a9955;opacity:0.4"></div>
<div class="a" style="left:1837.0px;top:136.0px;width:3.0px;height:1.4px;background:#6a9955;opacity:0.4"></div>
<div class="a" style="left:1841.0px;top:136.0px;width:7.0px;height:1.4px;background:#6a9955;opacity:0.4"></div>
<div class="a" style="left:1802.0px;top:138.0px;width:6.0px;height:1.4px;background:#c586c0;opacity:0.4"></div>
<div class="a" style="left:1808.0px;top:138.0px;width:1.0px;height:1.4px;background:#d4d4d4;opacity:0.4"></div>
<div class="a" style="left:1800.0px;top:140.0px;width:1.0px;height:1.4px;background:#d4d4d4;opacity:0.4"></div>
<div class="a" style="left:1800.0px;top:144.0px;width:2.0px;height:1.4px;background:#6a9955;opacity:0.4"></div>
<div class="a" style="left:1803.0px;top:144.0px;width:3.0px;height:1.4px;background:#6a9955;opacity:0.4"></div>
<div class="a" style="left:1807.0px;top:144.0px;width:1.0px;height:1.4px;background:#6a9955;opacity:0.4"></div>
<div class="a" style="left:1809.0px;top:144.0px;width:9.0px;height:1.4px;background:#6a9955;opacity:0.4"></div>
<div class="a" style="left:1819.0px;top:144.0px;width:2.0px;height:1.4px;background:#6a9955;opacity:0.4"></div>
<div class="a" style="left:1822.0px;top:144.0px;width:1.0px;height:1.4px;background:#6a9955;opacity:0.4"></div>
<div class="a" style="left:1824.0px;top:144.0px;width:7.0px;height:1.4px;background:#6a9955;opacity:0.4"></div>
<div class="a" style="left:1832.0px;top:144.0px;width:12.0px;height:1.4px;background:#6a9955;opacity:0.4"></div>
<div class="a" style="left:1845.0px;top:144.0px;width:8.0px;height:1.4px;background:#6a9955;opacity:0.4"></div>
<div class="a" style="left:1854.0px;top:144.0px;width:5.0px;height:1.4px;background:#6a9955;opacity:0.4"></div>
<div class="a" style="left:1860.0px;top:144.0px;width:3.0px;height:1.4px;background:#6a9955;opacity:0.4"></div>
<div class="a" style="left:1800.0px;top:146.0px;width:2.0px;height:1.4px;background:#6a9955;opacity:0.4"></div>
<div class="a" style="left:1803.0px;top:146.0px;width:2.0px;height:1.4px;background:#6a9955;opacity:0.4"></div>
<div class="a" style="left:1806.0px;top:146.0px;width:4.0px;height:1.4px;background:#6a9955;opacity:0.4"></div>
<div class="a" style="left:1811.0px;top:146.0px;width:4.0px;height:1.4px;background:#6a9955;opacity:0.4"></div>
<div class="a" style="left:1816.0px;top:146.0px;width:11.0px;height:1.4px;background:#6a9955;opacity:0.4"></div>
<div class="a" style="left:1828.0px;top:146.0px;width:7.0px;height:1.4px;background:#6a9955;opacity:0.4"></div>
<div class="a" style="left:1836.0px;top:146.0px;width:5.0px;height:1.4px;background:#6a9955;opacity:0.4"></div>
<div class="a" style="left:1842.0px;top:146.0px;width:3.0px;height:1.4px;background:#6a9955;opacity:0.4"></div>
<div class="a" style="left:1846.0px;top:146.0px;width:4.0px;height:1.4px;background:#6a9955;opacity:0.4"></div>
<div class="a" style="left:1851.0px;top:146.0px;width:4.0px;height:1.4px;background:#6a9955;opacity:0.4"></div>
<div class="a" style="left:1856.0px;top:146.0px;width:2.0px;height:1.4px;background:#6a9955;opacity:0.4"></div>
<div class="a" style="left:1859.0px;top:146.0px;width:3.0px;height:1.4px;background:#6a9955;opacity:0.4"></div>
<div class="a" style="left:1863.0px;top:146.0px;width:2.0px;height:1.4px;background:#6a9955;opacity:0.4"></div>
<div class="a" style="left:1800.0px;top:148.0px;width:2.0px;height:1.4px;background:#6a9955;opacity:0.4"></div>
<div class="a" style="left:1803.0px;top:148.0px;width:4.0px;height:1.4px;background:#6a9955;opacity:0.4"></div>
<div class="a" style="left:1808.0px;top:148.0px;width:4.0px;height:1.4px;background:#6a9955;opacity:0.4"></div>
<div class="a" style="left:1813.0px;top:148.0px;width:2.0px;height:1.4px;background:#6a9955;opacity:0.4"></div>
<div class="a" style="left:1816.0px;top:148.0px;width:8.0px;height:1.4px;background:#6a9955;opacity:0.4"></div>
<div class="a" style="left:1800.0px;top:150.0px;width:5.0px;height:1.4px;background:#569cd6;opacity:0.4"></div>
<div class="a" style="left:1806.0px;top:150.0px;width:11.0px;height:1.4px;background:#4fc1ff;opacity:0.4"></div>
<div class="a" style="left:1818.0px;top:150.0px;width:1.0px;height:1.4px;background:#d4d4d4;opacity:0.4"></div>
<div class="a" style="left:1820.0px;top:150.0px;width:8.0px;height:1.4px;background:#4fc1ff;opacity:0.4"></div>
<div class="a" style="left:1828.0px;top:150.0px;width:1.0px;height:1.4px;background:#d4d4d4;opacity:0.4"></div>
<div class="a" style="left:1829.0px;top:150.0px;width:10.0px;height:1.4px;background:#dcdcaa;opacity:0.4"></div>
<div class="a" style="left:1839.0px;top:150.0px;width:1.0px;height:1.4px;background:#d4d4d4;opacity:0.4"></div>
<div class="a" style="left:1840.0px;top:150.0px;width:11.0px;height:1.4px;background:#4fc1ff;opacity:0.4"></div>
<div class="a" style="left:1851.0px;top:150.0px;width:2.0px;height:1.4px;background:#d4d4d4;opacity:0.4"></div>
<div class="a" style="left:1800.0px;top:154.0px;width:2.0px;height:1.4px;background:#6a9955;opacity:0.4"></div>
<div class="a" style="left:1803.0px;top:154.0px;width:3.0px;height:1.4px;background:#6a9955;opacity:0.4"></div>
<div class="a" style="left:1807.0px;top:154.0px;width:4.0px;height:1.4px;background:#6a9955;opacity:0.4"></div>
<div class="a" style="left:1812.0px;top:154.0px;width:4.0px;height:1.4px;background:#6a9955;opacity:0.4"></div>
<div class="a" style="left:1817.0px;top:154.0px;width:7.0px;height:1.4px;background:#6a9955;opacity:0.4"></div>
<div class="a" style="left:1825.0px;top:154.0px;width:4.0px;height:1.4px;background:#6a9955;opacity:0.4"></div>
<div class="a" style="left:1830.0px;top:154.0px;width:5.0px;height:1.4px;background:#6a9955;opacity:0.4"></div>
<div class="a" style="left:1836.0px;top:154.0px;width:9.0px;height:1.4px;background:#6a9955;opacity:0.4"></div>
<div class="a" style="left:1846.0px;top:154.0px;width:4.0px;height:1.4px;background:#6a9955;opacity:0.4"></div>
<div class="a" style="left:1800.0px;top:156.0px;width:5.0px;height:1.4px;background:#569cd6;opacity:0.4"></div>
<div class="a" style="left:1806.0px;top:156.0px;width:1.0px;height:1.4px;background:#d4d4d4;opacity:0.4"></div>
<div class="a" style="left:1807.0px;top:156.0px;width:5.0px;height:1.4px;background:#4fc1ff;opacity:0.4"></div>
<div class="a" style="left:1812.0px;top:156.0px;width:1.0px;height:1.4px;background:#d4d4d4;opacity:0.4"></div>
<div class="a" style="left:1814.0px;top:156.0px;width:13.0px;height:1.4px;background:#4fc1ff;opacity:0.4"></div>
<div class="a" style="left:1827.0px;top:156.0px;width:1.0px;height:1.4px;background:#d4d4d4;opacity:0.4"></div>
<div class="a" style="left:1829.0px;top:156.0px;width:1.0px;height:1.4px;background:#d4d4d4;opacity:0.4"></div>
<div class="a" style="left:1831.0px;top:156.0px;width:5.0px;height:1.4px;background:#c586c0;opacity:0.4"></div>
<div class="a" style="left:1837.0px;top:156.0px;width:6.0px;height:1.4px;background:#4fc1ff;opacity:0.4"></div>
<div class="a" style="left:1843.0px;top:156.0px;width:1.0px;height:1.4px;background:#d4d4d4;opacity:0.4"></div>
<div class="a" style="left:1844.0px;top:156.0px;width:19.0px;height:1.4px;background:#dcdcaa;opacity:0.4"></div>
<div class="a" style="left:1863.0px;top:156.0px;width:2.0px;height:1.4px;background:#d4d4d4;opacity:0.4"></div>
<div class="a" style="left:1802.0px;top:158.0px;width:4.0px;height:1.4px;background:#9cdcfe;opacity:0.4"></div>
<div class="a" style="left:1806.0px;top:158.0px;width:1.0px;height:1.4px;background:#d4d4d4;opacity:0.4"></div>
<div class="a" style="left:1808.0px;top:158.0px;width:6.0px;height:1.4px;background:#ce9178;opacity:0.4"></div>
<div class="a" style="left:1814.0px;top:158.0px;width:1.0px;height:1.4px;background:#d4d4d4;opacity:0.4"></div>
<div class="a" style="left:1802.0px;top:160.0px;width:4.0px;height:1.4px;background:#9cdcfe;opacity:0.4"></div>
<div class="a" style="left:1806.0px;top:160.0px;width:1.0px;height:1.4px;background:#d4d4d4;opacity:0.4"></div>
<div class="a" style="left:1808.0px;top:160.0px;width:11.0px;height:1.4px;background:#4fc1ff;opacity:0.4"></div>
<div class="a" style="left:1819.0px;top:160.0px;width:1.0px;height:1.4px;background:#d4d4d4;opacity:0.4"></div>
<div class="a" style="left:1800.0px;top:162.0px;width:3.0px;height:1.4px;background:#d4d4d4;opacity:0.4"></div>
<div class="a" style="left:1800.0px;top:166.0px;width:2.0px;height:1.4px;background:#c586c0;opacity:0.4"></div>
<div class="a" style="left:1803.0px;top:166.0px;width:1.0px;height:1.4px;background:#d4d4d4;opacity:0.4"></div>
<div class="a" style="left:1804.0px;top:166.0px;width:5.0px;height:1.4px;background:#4fc1ff;opacity:0.4"></div>
<div class="a" style="left:1809.0px;top:166.0px;width:1.0px;height:1.4px;background:#d4d4d4;opacity:0.4"></div>
<div class="a" style="left:1811.0px;top:166.0px;width:1.0px;height:1.4px;background:#d4d4d4;opacity:0.4"></div>
<div class="a" style="left:1802.0px;top:168.0px;width:7.0px;height:1.4px;background:#9cdcfe;opacity:0.4"></div>
<div class="a" style="left:1809.0px;top:168.0px;width:1.0px;height:1.4px;background:#d4d4d4;opacity:0.4"></div>
<div class="a" style="left:1810.0px;top:168.0px;width:3.0px;height:1.4px;background:#dcdcaa;opacity:0.4"></div>
<div class="a" style="left:1813.0px;top:168.0px;width:1.0px;height:1.4px;background:#d4d4d4;opacity:0.4"></div>
<div class="a" style="left:1814.0px;top:168.0px;width:9.0px;height:1.4px;background:#ce9178;opacity:0.4"></div>
<div class="a" style="left:1823.0px;top:168.0px;width:1.0px;height:1.4px;background:#d4d4d4;opacity:0.4"></div>
<div class="a" style="left:1825.0px;top:168.0px;width:5.0px;height:1.4px;background:#4fc1ff;opacity:0.4"></div>
<div class="a" style="left:1830.0px;top:168.0px;width:2.0px;height:1.4px;background:#d4d4d4;opacity:0.4"></div>
<div class="a" style="left:1802.0px;top:170.0px;width:15.0px;height:1.4px;background:#dcdcaa;opacity:0.4"></div>
<div class="a" style="left:1817.0px;top:170.0px;width:1.0px;height:1.4px;background:#d4d4d4;opacity:0.4"></div>
<div class="a" style="left:1818.0px;top:170.0px;width:5.0px;height:1.4px;background:#4fc1ff;opacity:0.4"></div>
<div class="a" style="left:1823.0px;top:170.0px;width:1.0px;height:1.4px;background:#d4d4d4;opacity:0.4"></div>
<div class="a" style="left:1824.0px;top:170.0px;width:7.0px;height:1.4px;background:#9cdcfe;opacity:0.4"></div>
<div class="a" style="left:1831.0px;top:170.0px;width:2.0px;height:1.4px;background:#d4d4d4;opacity:0.4"></div>
<div class="a" style="left:1802.0px;top:172.0px;width:17.0px;height:1.4px;background:#dcdcaa;opacity:0.4"></div>
<div class="a" style="left:1819.0px;top:172.0px;width:1.0px;height:1.4px;background:#d4d4d4;opacity:0.4"></div>
<div class="a" style="left:1820.0px;top:172.0px;width:4.0px;height:1.4px;background:#569cd6;opacity:0.4"></div>
<div class="a" style="left:1824.0px;top:172.0px;width:2.0px;height:1.4px;background:#d4d4d4;opacity:0.4"></div>
<div class="a" style="left:1800.0px;top:176.0px;width:1.0px;height:1.4px;background:#d4d4d4;opacity:0.4"></div>
<div class="a" style="left:1802.0px;top:176.0px;width:4.0px;height:1.4px;background:#c586c0;opacity:0.4"></div>
<div class="a" style="left:1807.0px;top:176.0px;width:1.0px;height:1.4px;background:#d4d4d4;opacity:0.4"></div>
<div class="a" style="left:1802.0px;top:178.0px;width:7.0px;height:1.4px;background:#9cdcfe;opacity:0.4"></div>
<div class="a" style="left:1809.0px;top:178.0px;width:1.0px;height:1.4px;background:#d4d4d4;opacity:0.4"></div>
<div class="a" style="left:1810.0px;top:178.0px;width:3.0px;height:1.4px;background:#dcdcaa;opacity:0.4"></div>
<div class="a" style="left:1813.0px;top:178.0px;width:1.0px;height:1.4px;background:#d4d4d4;opacity:0.4"></div>
<div class="a" style="left:1814.0px;top:178.0px;width:17.0px;height:1.4px;background:#ce9178;opacity:0.4"></div>
<div class="a" style="left:1831.0px;top:178.0px;width:1.0px;height:1.4px;background:#d4d4d4;opacity:0.4"></div>
<div class="a" style="left:1833.0px;top:178.0px;width:13.0px;height:1.4px;background:#4fc1ff;opacity:0.4"></div>
<div class="a" style="left:1846.0px;top:178.0px;width:2.0px;height:1.4px;background:#d4d4d4;opacity:0.4"></div>
<div class="a" style="left:1802.0px;top:180.0px;width:17.0px;height:1.4px;background:#dcdcaa;opacity:0.4"></div>
<div class="a" style="left:1819.0px;top:180.0px;width:1.0px;height:1.4px;background:#d4d4d4;opacity:0.4"></div>
<div class="a" style="left:1820.0px;top:180.0px;width:13.0px;height:1.4px;background:#4fc1ff;opacity:0.4"></div>
<div class="a" style="left:1833.0px;top:180.0px;width:1.0px;height:1.4px;background:#d4d4d4;opacity:0.4"></div>
<div class="a" style="left:1834.0px;top:180.0px;width:2.0px;height:1.4px;background:#9cdcfe;opacity:0.4"></div>
<div class="a" style="left:1836.0px;top:180.0px;width:2.0px;height:1.4px;background:#d4d4d4;opacity:0.4"></div>
<div class="a" style="left:1802.0px;top:182.0px;width:15.0px;height:1.4px;background:#dcdcaa;opacity:0.4"></div>
<div class="a" style="left:1817.0px;top:182.0px;width:1.0px;height:1.4px;background:#d4d4d4;opacity:0.4"></div>
<div class="a" style="left:1818.0px;top:182.0px;width:4.0px;height:1.4px;background:#569cd6;opacity:0.4"></div>
<div class="a" style="left:1822.0px;top:182.0px;width:2.0px;height:1.4px;background:#d4d4d4;opacity:0.4"></div>
<div class="a" style="left:1800.0px;top:184.0px;width:1.0px;height:1.4px;background:#d4d4d4;opacity:0.4"></div>
<div class="a" style="left:1798.0px;top:186.0px;width:2.0px;height:1.4px;background:#d4d4d4;opacity:0.4"></div>
<div class="a" style="left:1796.0px;top:188.0px;width:6.0px;height:1.4px;background:#c586c0;opacity:0.4"></div>
<div class="a" style="left:1803.0px;top:188.0px;width:1.0px;height:1.4px;background:#d4d4d4;opacity:0.4"></div>
<div class="a" style="left:1800.0px;top:190.0px;width:1.0px;height:1.4px;background:#d4d4d4;opacity:0.4"></div>
<div class="a" style="left:1801.0px;top:190.0px;width:3.0px;height:1.4px;background:#569cd6;opacity:0.4"></div>
<div class="a" style="left:1805.0px;top:190.0px;width:9.0px;height:1.4px;background:#9cdcfe;opacity:0.4"></div>
<div class="a" style="left:1814.0px;top:190.0px;width:1.0px;height:1.4px;background:#d4d4d4;opacity:0.4"></div>
<div class="a" style="left:1815.0px;top:190.0px;width:6.0px;height:1.4px;background:#ce9178;opacity:0.4"></div>
<div class="a" style="left:1821.0px;top:190.0px;width:1.0px;height:1.4px;background:#d4d4d4;opacity:0.4"></div>
<div class="a" style="left:1800.0px;top:192.0px;width:1.0px;height:1.4px;background:#d4d4d4;opacity:0.4"></div>
<div class="a" style="left:1801.0px;top:192.0px;width:4.0px;height:1.4px;background:#569cd6;opacity:0.4"></div>
<div class="a" style="left:1806.0px;top:192.0px;width:8.0px;height:1.4px;background:#9cdcfe;opacity:0.4"></div>
<div class="a" style="left:1814.0px;top:192.0px;width:2.0px;height:1.4px;background:#d4d4d4;opacity:0.4"></div>
<div class="a" style="left:1816.0px;top:192.0px;width:12.0px;height:1.4px;background:#dcdcaa;opacity:0.4"></div>
<div class="a" style="left:1828.0px;top:192.0px;width:2.0px;height:1.4px;background:#d4d4d4;opacity:0.4"></div>
<div class="a" style="left:1800.0px;top:194.0px;width:1.0px;height:1.4px;background:#d4d4d4;opacity:0.4"></div>
<div class="a" style="left:1801.0px;top:194.0px;width:11.0px;height:1.4px;background:#4ec9b0;opacity:0.4"></div>
<div class="a" style="left:1813.0px;top:194.0px;width:2.0px;height:1.4px;background:#d4d4d4;opacity:0.4"></div>
<div class="a" style="left:1800.0px;top:196.0px;width:1.0px;height:1.4px;background:#d4d4d4;opacity:0.4"></div>
<div class="a" style="left:1801.0px;top:196.0px;width:6.0px;height:1.4px;background:#569cd6;opacity:0.4"></div>
<div class="a" style="left:1808.0px;top:196.0px;width:4.0px;height:1.4px;background:#9cdcfe;opacity:0.4"></div>
<div class="a" style="left:1812.0px;top:196.0px;width:1.0px;height:1.4px;background:#d4d4d4;opacity:0.4"></div>
<div class="a" style="left:1813.0px;top:196.0px;width:8.0px;height:1.4px;background:#ce9178;opacity:0.4"></div>
<div class="a" style="left:1822.0px;top:196.0px;width:8.0px;height:1.4px;background:#9cdcfe;opacity:0.4"></div>
<div class="a" style="left:1830.0px;top:196.0px;width:3.0px;height:1.4px;background:#d4d4d4;opacity:0.4"></div>
<div class="a" style="left:1833.0px;top:196.0px;width:6.0px;height:1.4px;background:#4fc1ff;opacity:0.4"></div>
<div class="a" style="left:1839.0px;top:196.0px;width:2.0px;height:1.4px;background:#d4d4d4;opacity:0.4"></div>
<div class="a" style="left:1802.0px;top:198.0px;width:3.0px;height:1.4px;background:#d4d4d4;opacity:0.4"></div>
<div class="a" style="left:1800.0px;top:200.0px;width:2.0px;height:1.4px;background:#d4d4d4;opacity:0.4"></div>
<div class="a" style="left:1802.0px;top:200.0px;width:6.0px;height:1.4px;background:#569cd6;opacity:0.4"></div>
<div class="a" style="left:1808.0px;top:200.0px;width:1.0px;height:1.4px;background:#d4d4d4;opacity:0.4"></div>
<div class="a" style="left:1798.0px;top:202.0px;width:2.0px;height:1.4px;background:#d4d4d4;opacity:0.4"></div>
<div class="a" style="left:1800.0px;top:202.0px;width:4.0px;height:1.4px;background:#569cd6;opacity:0.4"></div>
<div class="a" style="left:1804.0px;top:202.0px;width:1.0px;height:1.4px;background:#d4d4d4;opacity:0.4"></div>
<div class="a" style="left:1798.0px;top:204.0px;width:1.0px;height:1.4px;background:#569cd6;opacity:0.4"></div>
<div class="a" style="left:1802.0px;top:206.0px;width:12.0px;height:1.4px;background:#4fc1ff;opacity:0.4"></div>
<div class="a" style="left:1815.0px;top:206.0px;width:2.0px;height:1.4px;background:#d4d4d4;opacity:0.4"></div>
<div class="a" style="left:1818.0px;top:206.0px;width:1.0px;height:1.4px;background:#d4d4d4;opacity:0.4"></div>
<div class="a" style="left:1819.0px;top:206.0px;width:1.0px;height:1.4px;background:#569cd6;opacity:0.4"></div>
<div class="a" style="left:1821.0px;top:206.0px;width:5.0px;height:1.4px;background:#9cdcfe;opacity:0.4"></div>
<div class="a" style="left:1826.0px;top:206.0px;width:3.0px;height:1.4px;background:#d4d4d4;opacity:0.4"></div>
<div class="a" style="left:1829.0px;top:206.0px;width:5.0px;height:1.4px;background:#9cdcfe;opacity:0.4"></div>
<div class="a" style="left:1834.0px;top:206.0px;width:1.0px;height:1.4px;background:#d4d4d4;opacity:0.4"></div>
<div class="a" style="left:1836.0px;top:206.0px;width:5.0px;height:1.4px;background:#ce9178;opacity:0.4"></div>
<div class="a" style="left:1841.0px;top:206.0px;width:3.0px;height:1.4px;background:#d4d4d4;opacity:0.4"></div>
<div class="a" style="left:1844.0px;top:206.0px;width:1.0px;height:1.4px;background:#569cd6;opacity:0.4"></div>
<div class="a" style="left:1845.0px;top:206.0px;width:12.0px;height:1.4px;background:#4fc1ff;opacity:0.4"></div>
<div class="a" style="left:1857.0px;top:206.0px;width:1.0px;height:1.4px;background:#569cd6;opacity:0.4"></div>
<div class="a" style="left:1858.0px;top:206.0px;width:2.0px;height:1.4px;background:#d4d4d4;opacity:0.4"></div>
<div class="a" style="left:1860.0px;top:206.0px;width:1.0px;height:1.4px;background:#569cd6;opacity:0.4"></div>
<div class="a" style="left:1861.0px;top:206.0px;width:1.0px;height:1.4px;background:#d4d4d4;opacity:0.4"></div>
<div class="a" style="left:1798.0px;top:208.0px;width:1.0px;height:1.4px;background:#569cd6;opacity:0.4"></div>
<div class="a" style="left:1798.0px;top:210.0px;width:1.0px;height:1.4px;background:#569cd6;opacity:0.4"></div>
<div class="a" style="left:1802.0px;top:212.0px;width:14.0px;height:1.4px;background:#4fc1ff;opacity:0.4"></div>
<div class="a" style="left:1817.0px;top:212.0px;width:2.0px;height:1.4px;background:#d4d4d4;opacity:0.4"></div>
<div class="a" style="left:1820.0px;top:212.0px;width:1.0px;height:1.4px;background:#d4d4d4;opacity:0.4"></div>
<div class="a" style="left:1821.0px;top:212.0px;width:1.0px;height:1.4px;background:#569cd6;opacity:0.4"></div>
<div class="a" style="left:1823.0px;top:212.0px;width:5.0px;height:1.4px;background:#9cdcfe;opacity:0.4"></div>
<div class="a" style="left:1828.0px;top:212.0px;width:3.0px;height:1.4px;background:#d4d4d4;opacity:0.4"></div>
<div class="a" style="left:1831.0px;top:212.0px;width:5.0px;height:1.4px;background:#9cdcfe;opacity:0.4"></div>
<div class="a" style="left:1836.0px;top:212.0px;width:1.0px;height:1.4px;background:#d4d4d4;opacity:0.4"></div>
<div class="a" style="left:1838.0px;top:212.0px;width:7.0px;height:1.4px;background:#ce9178;opacity:0.4"></div>
<div class="a" style="left:1845.0px;top:212.0px;width:3.0px;height:1.4px;background:#d4d4d4;opacity:0.4"></div>
<div class="a" style="left:1848.0px;top:212.0px;width:7.0px;height:1.4px;background:#d4d4d4;opacity:0.4"></div>
<div class="a" style="left:1856.0px;top:212.0px;width:4.0px;height:1.4px;background:#d4d4d4;opacity:0.4"></div>
<div class="a" style="left:1861.0px;top:212.0px;width:2.0px;height:1.4px;background:#d4d4d4;opacity:0.4"></div>
<div class="a" style="left:1863.0px;top:212.0px;width:2.0px;height:1.4px;background:#d4d4d4;opacity:0.4"></div>
<div class="a" style="left:1865.0px;top:212.0px;width:1.0px;height:1.4px;background:#569cd6;opacity:0.4"></div>
<div class="a" style="left:1866.0px;top:212.0px;width:1.0px;height:1.4px;background:#d4d4d4;opacity:0.4"></div>
<div class="a" style="left:1798.0px;top:214.0px;width:1.0px;height:1.4px;background:#569cd6;opacity:0.4"></div>
<div class="a" style="left:1799.0px;top:216.0px;width:2.0px;height:1.4px;background:#d4d4d4;opacity:0.4"></div>
<div class="a" style="left:1801.0px;top:216.0px;width:3.0px;height:1.4px;background:#569cd6;opacity:0.4"></div>
<div class="a" style="left:1804.0px;top:216.0px;width:1.0px;height:1.4px;background:#d4d4d4;opacity:0.4"></div>
<div class="a" style="left:1796.0px;top:218.0px;width:2.0px;height:1.4px;background:#d4d4d4;opacity:0.4"></div>
<div class="a" style="left:1792.0px;top:220.0px;width:2.0px;height:1.4px;background:#d4d4d4;opacity:0.4"></div>
<div class="a" style="left:1792.0px;top:224.0px;width:6.0px;height:1.4px;background:#c586c0;opacity:0.4"></div>
<div class="a" style="left:1799.0px;top:224.0px;width:7.0px;height:1.4px;background:#c586c0;opacity:0.4"></div>
<div class="a" style="left:1807.0px;top:224.0px;width:10.0px;height:1.4px;background:#dcdcaa;opacity:0.4"></div>
<div class="a" style="left:1817.0px;top:224.0px;width:1.0px;height:1.4px;background:#d4d4d4;opacity:0.4"></div>
<div class="a" style="left:0;top:1014px;width:1920px;height:26px;background:#007acc"></div>
<svg style="left:19px;top:1019px" width="14" height="16" viewBox="0 0 14 16" fill="none" stroke="#fff" stroke-width="1.3">
<circle cx="3" cy="2.5" r="1.8"/><circle cx="3" cy="13.5" r="1.8"/><circle cx="11" cy="5" r="1.8"/><path d="M3 4.3 V11.7 M11 6.8 C11 10 4 9 3 11.5"/></svg>
<svg style="left:38.52px;top:1015.28px" width="33.9" height="23.4"><text x="0" y="17.52" textLength="31.94" lengthAdjust="spacingAndGlyphs" style="font-family:'Liberation Sans';font-size:14.6px;font-weight:normal;font-style:normal;fill:#ffffff;stroke:#ffffff;stroke-width:0.12px;">main</text></svg>
<svg style="left:89px;top:1020px" width="17" height="14" viewBox="0 0 17 14" fill="none" stroke="#fff" stroke-width="1.4">
<path d="M2 6 A6.5 6 0 0 1 14.5 5 M15 8 A6.5 6 0 0 1 2.5 9"/><path d="M14.8 1.5 V5.3 H11 M2.2 12.5 V8.7 H6"/></svg>
<svg style="left:126px;top:1019px" width="16" height="16" viewBox="0 0 16 16" fill="none" stroke="#fff" stroke-width="1.2">
<circle cx="8" cy="8" r="7"/><path d="M5 5 L11 11 M11 5 L5 11"/></svg>
<svg style="left:145.43px;top:1015.28px" width="10.1" height="23.4"><text x="0" y="17.52" textLength="8.14" lengthAdjust="spacingAndGlyphs" style="font-family:'Liberation Sans';font-size:14.6px;font-weight:normal;font-style:normal;fill:#ffffff;stroke:#ffffff;stroke-width:0.12px;">0</text></svg>
<svg style="left:158px;top:1019px" width="17" height="15" viewBox="0 0 17 15" fill="none" stroke="#fff" stroke-width="1.2">
<path d="M8.5 1 L16 14 H1 Z M8.5 5 V10 M8.5 11.5 V12.8"/></svg>
<svg style="left:178.14px;top:1015.28px" width="10.7" height="23.4"><text x="0" y="17.52" textLength="8.73" lengthAdjust="spacingAndGlyphs" style="font-family:'Liberation Sans';font-size:14.6px;font-weight:normal;font-style:normal;fill:#ffffff;stroke:#ffffff;stroke-width:0.12px;">0</text></svg>
<svg style="left:209px;top:1019px" width="10" height="16" viewBox="0 0 10 16" fill="none" stroke="#fff" stroke-width="1.3">
<circle cx="5" cy="2.5" r="1.8"/><path d="M2.5 6 H7.5 V11 H6.5 V15 H3.5 V11 H2.5 Z"/></svg>
<svg style="left:226.97px;top:1015.28px" width="43.3" height="23.4"><text x="0" y="17.52" textLength="41.26" lengthAdjust="spacingAndGlyphs" style="font-family:'Liberation Sans';font-size:14.6px;font-weight:normal;font-style:normal;fill:#ffffff;stroke:#ffffff;stroke-width:0.12px;">Atahar</text></svg>
<svg style="left:274px;top:1018px" width="16" height="17" viewBox="0 0 16 17">
<rect x="1" y="7" width="12" height="9" rx="1.5" fill="#f5c518" stroke="#222" stroke-width="0.8"/><path d="M4 7 V4.5 A3.5 3.5 0 0 1 11 4.5 V6" fill="none" stroke="#222" stroke-width="1.6"/><circle cx="12" cy="9" r="3" fill="#f5c518" stroke="#222" stroke-width="0.6"/></svg>
<svg style="left:311px;top:1019px" width="18" height="16" viewBox="0 0 18 16" fill="none" stroke="#fff" stroke-width="1.4">
<path d="M2 12 C1.5 6 6 3.5 11 4 V1 L16.5 5.5 L11 10 V7 C7 6.5 5 8.5 4.5 12"/><circle cx="6" cy="13.5" r="1.8"/></svg>
<svg style="left:331.38px;top:1015.28px" width="67.5" height="23.4"><text x="0" y="17.52" textLength="65.48" lengthAdjust="spacingAndGlyphs" style="font-family:'Liberation Sans';font-size:14.6px;font-weight:normal;font-style:normal;fill:#ffffff;stroke:#ffffff;stroke-width:0.12px;">Live Share</text></svg>
<svg style="left:1314.85px;top:1015.48px" width="85.1" height="23.4"><text x="0" y="17.52" textLength="83.06" lengthAdjust="spacingAndGlyphs" style="font-family:'Liberation Sans';font-size:14.6px;font-weight:normal;font-style:normal;fill:#ffffff;stroke:#ffffff;stroke-width:0.12px;">Ln 45, Col 16</text></svg>
<svg style="left:1416.09px;top:1015.48px" width="61.6" height="23.4"><text x="0" y="17.52" textLength="59.58" lengthAdjust="spacingAndGlyphs" style="font-family:'Liberation Sans';font-size:14.6px;font-weight:normal;font-style:normal;fill:#ffffff;stroke:#ffffff;stroke-width:0.12px;">Spaces: 2</text></svg>
<svg style="left:1493.22px;top:1015.48px" width="41.7" height="23.4"><text x="0" y="17.52" textLength="39.69" lengthAdjust="spacingAndGlyphs" style="font-family:'Liberation Sans';font-size:14.6px;font-weight:normal;font-style:normal;fill:#ffffff;stroke:#ffffff;stroke-width:0.12px;">UTF-8</text></svg>
<svg style="left:1551.08px;top:1015.48px" width="34.1" height="23.4"><text x="0" y="17.52" textLength="32.12" lengthAdjust="spacingAndGlyphs" style="font-family:'Liberation Sans';font-size:14.6px;font-weight:normal;font-style:normal;fill:#ffffff;stroke:#ffffff;stroke-width:0.12px;">CRLF</text></svg>
<svg style="left:1601.79px;top:1015.48px" width="65.3" height="23.4"><text x="0" y="17.52" textLength="63.31" lengthAdjust="spacingAndGlyphs" style="font-family:'Liberation Sans';font-size:14.6px;font-weight:normal;font-style:normal;fill:#ffffff;stroke:#ffffff;stroke-width:0.12px;">JavaScript</text></svg>
<svg style="left:1685px;top:1018px" width="16" height="18" viewBox="0 0 16 18" fill="none" stroke="#fff" stroke-width="1.3">
<circle cx="8" cy="7" r="6.3"/><circle cx="8" cy="7" r="3.5"/><path d="M8 7 V17" stroke-width="2"/></svg>
<svg style="left:1704.30px;top:1015.48px" width="50.0" height="23.4"><text x="0" y="17.52" textLength="48.02" lengthAdjust="spacingAndGlyphs" style="font-family:'Liberation Sans';font-size:14.6px;font-weight:normal;font-style:normal;fill:#ffffff;stroke:#ffffff;stroke-width:0.12px;">Go Live</text></svg>
<svg style="left:1770px;top:1020px" width="18" height="12" viewBox="0 0 18 12" fill="none" stroke="#fff" stroke-width="1.3">
<path d="M1 6 L4 10 L11 1 M6 9 L7 10 L15 1"/></svg>
<svg style="left:1791.22px;top:1015.48px" width="40.9" height="23.4"><text x="0" y="17.52" textLength="38.88" lengthAdjust="spacingAndGlyphs" style="font-family:'Liberation Sans';font-size:14.6px;font-weight:normal;font-style:normal;fill:#ffffff;stroke:#ffffff;stroke-width:0.12px;">ESLint</text></svg>
<svg style="left:1850px;top:1018px" width="18" height="17" viewBox="0 0 18 17" fill="none" stroke="#fff" stroke-width="1.3">
<circle cx="6" cy="6" r="3"/><path d="M1 16 C1 11 11 11 11 16"/><path d="M9 2 H17 V8 H14 L12 10 V8"/></svg>
<svg style="left:1886px;top:1018px" width="16" height="18" viewBox="0 0 16 18" fill="none" stroke="#fff" stroke-width="1.3">
<path d="M3 12 V7 A5 5 0 0 1 13 7 V12 L15 14 H1 Z M6 15.5 A2 2 0 0 0 10 15.5"/></svg>
<div class="a" style="left:0;top:1040px;width:1920px;height:40px;background:#1b1a1a"></div>
<svg style="left:15.6px;top:1051.7px" width="17" height="18" viewBox="0 0 17 18" fill="#ffffff">
<path d="M0 1.9 L6.3 1.1 V8 H0 Z M7.3 1 L16.7 0 V8 H7.3 Z M0 9 H6.3 V16 L0 15.3 Z M7.3 9 H16.7 V17.4 L7.3 16.3 Z"/></svg>
<div class="a" style="left:48px;top:1040px;width:344px;height:40px;background:#f0f0f0;border-top:1px solid #c9c9c9;border-bottom:1px solid #c9c9c9"></div>
<svg style="left:59px;top:1051px" width="18" height="18" viewBox="0 0 18 18" fill="none" stroke="#1b1b1b" stroke-width="1.3">
<circle cx="11.3" cy="6.4" r="5"/><path d="M7.7 10 L1.3 16.5"/></svg>
<svg style="left:88.43px;top:1048.44px" width="130.0" height="23.7"><text x="0" y="17.76" textLength="128.01" lengthAdjust="spacingAndGlyphs" style="font-family:'Liberation Sans';font-size:14.8px;font-weight:normal;font-style:normal;fill:#333333;stroke:#333333;stroke-width:0.12px;">Type here to search</text></svg>
<div class="a" style="left:407.2px;top:1051.2px;width:17.6px;height:17.6px;border:2.3px solid #ffffff;border-radius:50%"></div>
<svg style="left:455px;top:1051px" width="19" height="18" viewBox="0 0 19 18" fill="none" stroke="#ffffff" stroke-width="1.1">
<path d="M1.5 1 V3 H11.5 V1 M1.5 16.5 V14.5 H11.5 V16.5 M1.5 5 H11.5 V12.5 H1.5 Z M15.5 1 V3 M15.5 7 V16.5"/><rect x="14.3" y="4.2" width="2.4" height="2.4" fill="#fff" stroke="none"/></svg>
<svg style="left:503px;top:1047.8px" width="24" height="24" viewBox="0 0 24 24">
<defs><linearGradient id="eg" x1="0" y1="0.3" x2="1" y2="0.5"><stop offset="0" stop-color="#1a8bd8"/><stop offset="0.55" stop-color="#2bb8d6"/><stop offset="1" stop-color="#5de07a"/></linearGradient></defs>
<circle cx="12" cy="12" r="12" fill="url(#eg)"/>
<path d="M0.3 10 C1 18 7 24 13 24 C17 24 21 22 23 18.5 C20 20.5 15 20.5 12.5 18 C10 15.5 11 12 13.5 11 C9 8 2 9 0.3 10 Z" fill="#1565c0"/>
<ellipse cx="12.3" cy="13.6" rx="2.6" ry="2.3" fill="#1b1a1a"/>
</svg>
<svg style="left:553px;top:1050.4px" width="22" height="19" viewBox="0 0 22 19">
<path d="M0 0.8 Q0 0 0.8 0 H9 L10.5 1.8 H21.5 V18.2 H0 Z" fill="#e8a820"/><path d="M0 3 H21.5 V18.2 H0 Z" fill="#ffd867"/>
<path d="M3.8 18.2 V11.6 Q3.8 10.4 5 10.4 H16.5 Q17.7 10.4 17.7 11.6 V18.2 H14 V14 H7.6 V18.2 Z" fill="#3b8fe6"/></svg>
<div class="a" style="left:544px;top:1077px;width:40px;height:3px;background:#76b9ed"></div>
<svg style="left:601px;top:1047.8px" width="24" height="25" viewBox="0 0 24 25">
<path d="M5.8 7 V1.2 H18.2 V7" fill="none" stroke="#f5f5f5" stroke-width="1.6"/><rect x="0" y="6.3" width="23.4" height="18.2" rx="0.6" fill="#f2f2f2"/><rect x="0" y="6.3" width="23.4" height="1.8" fill="#d9d9d9"/>
<rect x="6.7" y="11" width="4.4" height="4.4" fill="#f25022"/><rect x="12" y="11" width="4.4" height="4.4" fill="#7fba00"/><rect x="6.7" y="16.3" width="4.4" height="4.4" fill="#00a4ef"/><rect x="12" y="16.3" width="4.4" height="4.4" fill="#ffb900"/></svg>
<svg style="left:650px;top:1048.9px" width="25" height="23" viewBox="0 0 25 23">
<path d="M0 6.7 L12.1 0 L24.3 6.7 V22.3 H0 Z" fill="#0f63c0"/><path d="M2.5 6.7 L12.1 13.3 L21.8 6.7 Z" fill="#f0f0f0"/>
<path d="M0 6.7 L12.1 14.5 L24.3 6.7 V22.3 H0 Z" fill="#28a8ea"/><path d="M0 22.3 L24.3 6.7 V22.3 Z" fill="#50d9ff" opacity="0.55"/></svg>
<svg style="left:699.9px;top:1047.8px" width="23" height="24" viewBox="0 0 23 24">
<defs><radialGradient id="ff" cx="0.7" cy="0.15" r="1"><stop offset="0" stop-color="#fff44f"/><stop offset="0.45" stop-color="#ff9a1e"/><stop offset="0.8" stop-color="#ff3c54"/><stop offset="1" stop-color="#e31587"/></radialGradient></defs>
<path d="M14.6 0 C17 2.5 21 5 22.4 12.3 C22.4 18.8 17.5 23.5 11.2 23.5 C5 23.5 0 18.5 0 12.3 C0 8.5 1.5 5.5 2.5 4.2 L3.2 6.5 C4 4.5 5 3.5 6 3 C6.3 4 6.7 5 7.5 5.5 C10 3.5 13 2.5 14.6 0 Z" fill="url(#ff)"/>
<circle cx="10.6" cy="12.6" r="5.2" fill="#7a3fe0"/><path d="M3 10 C4 8 8 7 11 8.3 C8 8.5 6.5 9.5 5.8 11 Z" fill="#ffb63a"/></svg>
<svg style="left:750.2px;top:1049.9px" width="20" height="21" viewBox="0 0 20 21">
<path d="M2.2 0 H17.3 A2.2 2.2 0 0 1 19.5 2.2 V20.3 L16.3 18.2 H2.2 A2.2 2.2 0 0 1 0 16 V2.2 A2.2 2.2 0 0 1 2.2 0 Z" fill="#6f85d4"/>
<path d="M3.2 11.6 C3.3 8.4 4.3 6.2 5.6 5.4 C6.5 5.1 7.3 5 8 5.1 L8.3 5.8 C9.4 5.6 10.6 5.6 11.7 5.8 L12 5.1 C12.7 5 13.5 5.1 14.4 5.4 C15.7 6.2 16.7 8.4 16.8 11.6 C15.8 12.7 14.7 13.1 13.7 13.2 L13 12.2 C11.1 12.8 8.9 12.8 7 12.2 L6.3 13.2 C5.3 13.1 4.2 12.7 3.2 11.6 Z" fill="#ffffff"/>
<ellipse cx="7.6" cy="9.3" rx="1.1" ry="1.2" fill="#6f85d4"/><ellipse cx="12.4" cy="9.3" rx="1.1" ry="1.2" fill="#6f85d4"/></svg>
<div class="a" style="left:739.5px;top:1077px;width:40px;height:3px;background:#76b9ed"></div>
<svg style="left:797.8px;top:1048.3px" width="23" height="23" viewBox="0 0 23 23"><path d="M11.2 11.5 L1.50 5.90 A11.2 11.2 0 0 1 20.90 5.90 Z" fill="#db4437"/><path d="M11.2 11.5 L20.90 5.90 A11.2 11.2 0 0 1 11.20 22.70 Z" fill="#fcc934"/><path d="M11.2 11.5 L11.20 22.70 A11.2 11.2 0 0 1 1.50 5.90 Z" fill="#1ea362"/>
<circle cx="11.2" cy="11.5" r="5.9" fill="#ffffff"/><circle cx="11.2" cy="11.5" r="4.7" fill="#4a8af4"/></svg>
<div class="a" style="left:788.5px;top:1077px;width:40px;height:3px;background:#76b9ed"></div>
<div class="a" style="left:834.7px;top:1040px;width:44px;height:40px;background:#3b3b3b"></div>
<svg style="left:845.7px;top:1047.8px" width="24.5" height="24.5" viewBox="0 0 100 100">
<path d="M96.46 10.8 L75.86 0.9 a6.23 6.23 0 0 0 -7.1 1.2 L29.35 38.05 L12.19 25 a4.16 4.16 0 0 0 -5.32 0.24 L1.37 30.25 a4.17 4.17 0 0 0 0 6.16 L16.26 50 L1.37 63.59 a4.17 4.17 0 0 0 0 6.16 l5.5 5 a4.16 4.16 0 0 0 5.32 0.24 L29.35 61.95 L68.76 97.9 a6.22 6.22 0 0 0 7.1 1.2 l20.6 -9.9 A6.24 6.24 0 0 0 100 83.6 V16.4 a6.24 6.24 0 0 0 -3.54 -5.6 Z M75 72.7 L45.1 50 L75 27.3 Z" fill="#1f9cf0"/><path d="M75.86 0.9 L96.46 10.8 a6.24 6.24 0 0 1 3.54 5.6 V83.6 a6.24 6.24 0 0 1 -3.54 5.6 l-20.6 9.9 Z" fill="#0f7fcc" opacity="0.6"/></svg>
<div class="a" style="left:834.7px;top:1077px;width:44px;height:3px;background:#76b9ed"></div>
<svg style="left:1737px;top:1056.5px" width="13" height="7" viewBox="0 0 13 7"><path d="M0.5 6.5 L6.2 0.8 L11.9 6.5" fill="none" stroke="#fff" stroke-width="1.1"/></svg>
<svg style="left:1758.5px;top:1053.5px" width="18" height="14" viewBox="0 0 18 14" fill="none" stroke="#fff" stroke-width="1.05">
<path d="M4.5 0.5 H16.5 V10.5 H4.5 M10.5 10.5 V13 M7.5 13 H13.5"/><rect x="0.5" y="0.5" width="4" height="4.5"/><path d="M2.5 5 V13.5"/></svg>
<svg style="left:1783px;top:1053px" width="17" height="15" viewBox="0 0 17 15" fill="none" stroke="#fff" stroke-width="1.05">
<path d="M0.5 4.5 H3 L6 1 V13.5 L3 10 H0.5 Z M8.5 5 Q9.8 7.3 8.5 9.5 M11 3 Q13.5 7.3 11 11.5 M13.5 1 Q17 7.3 13.5 13.8"/></svg>
<svg style="left:1812.74px;top:1039.88px" width="46.2" height="20.2"><text x="0" y="15.12" textLength="44.23" lengthAdjust="spacingAndGlyphs" style="font-family:'Liberation Sans';font-size:12.6px;font-weight:normal;font-style:normal;fill:#ffffff;stroke:#ffffff;stroke-width:0.12px;">9:04 PM</text></svg>
<svg style="left:1811.22px;top:1058.18px" width="48.7" height="20.2"><text x="0" y="15.12" textLength="46.67" lengthAdjust="spacingAndGlyphs" style="font-family:'Liberation Sans';font-size:12.6px;font-weight:normal;font-style:normal;fill:#ffffff;stroke:#ffffff;stroke-width:0.12px;">5/2/2021</text></svg>
<svg style="left:1879px;top:1052.5px" width="17" height="16" viewBox="0 0 17 16" fill="none" stroke="#fff" stroke-width="1.1">
<path d="M0.5 0.5 H16 V12 H10.5 L8.2 14.8 L6 12 H0.5 Z"/></svg>
<div class="a" style="left:1915px;top:1040px;width:1px;height:40px;background:#5e5e5e"></div>
